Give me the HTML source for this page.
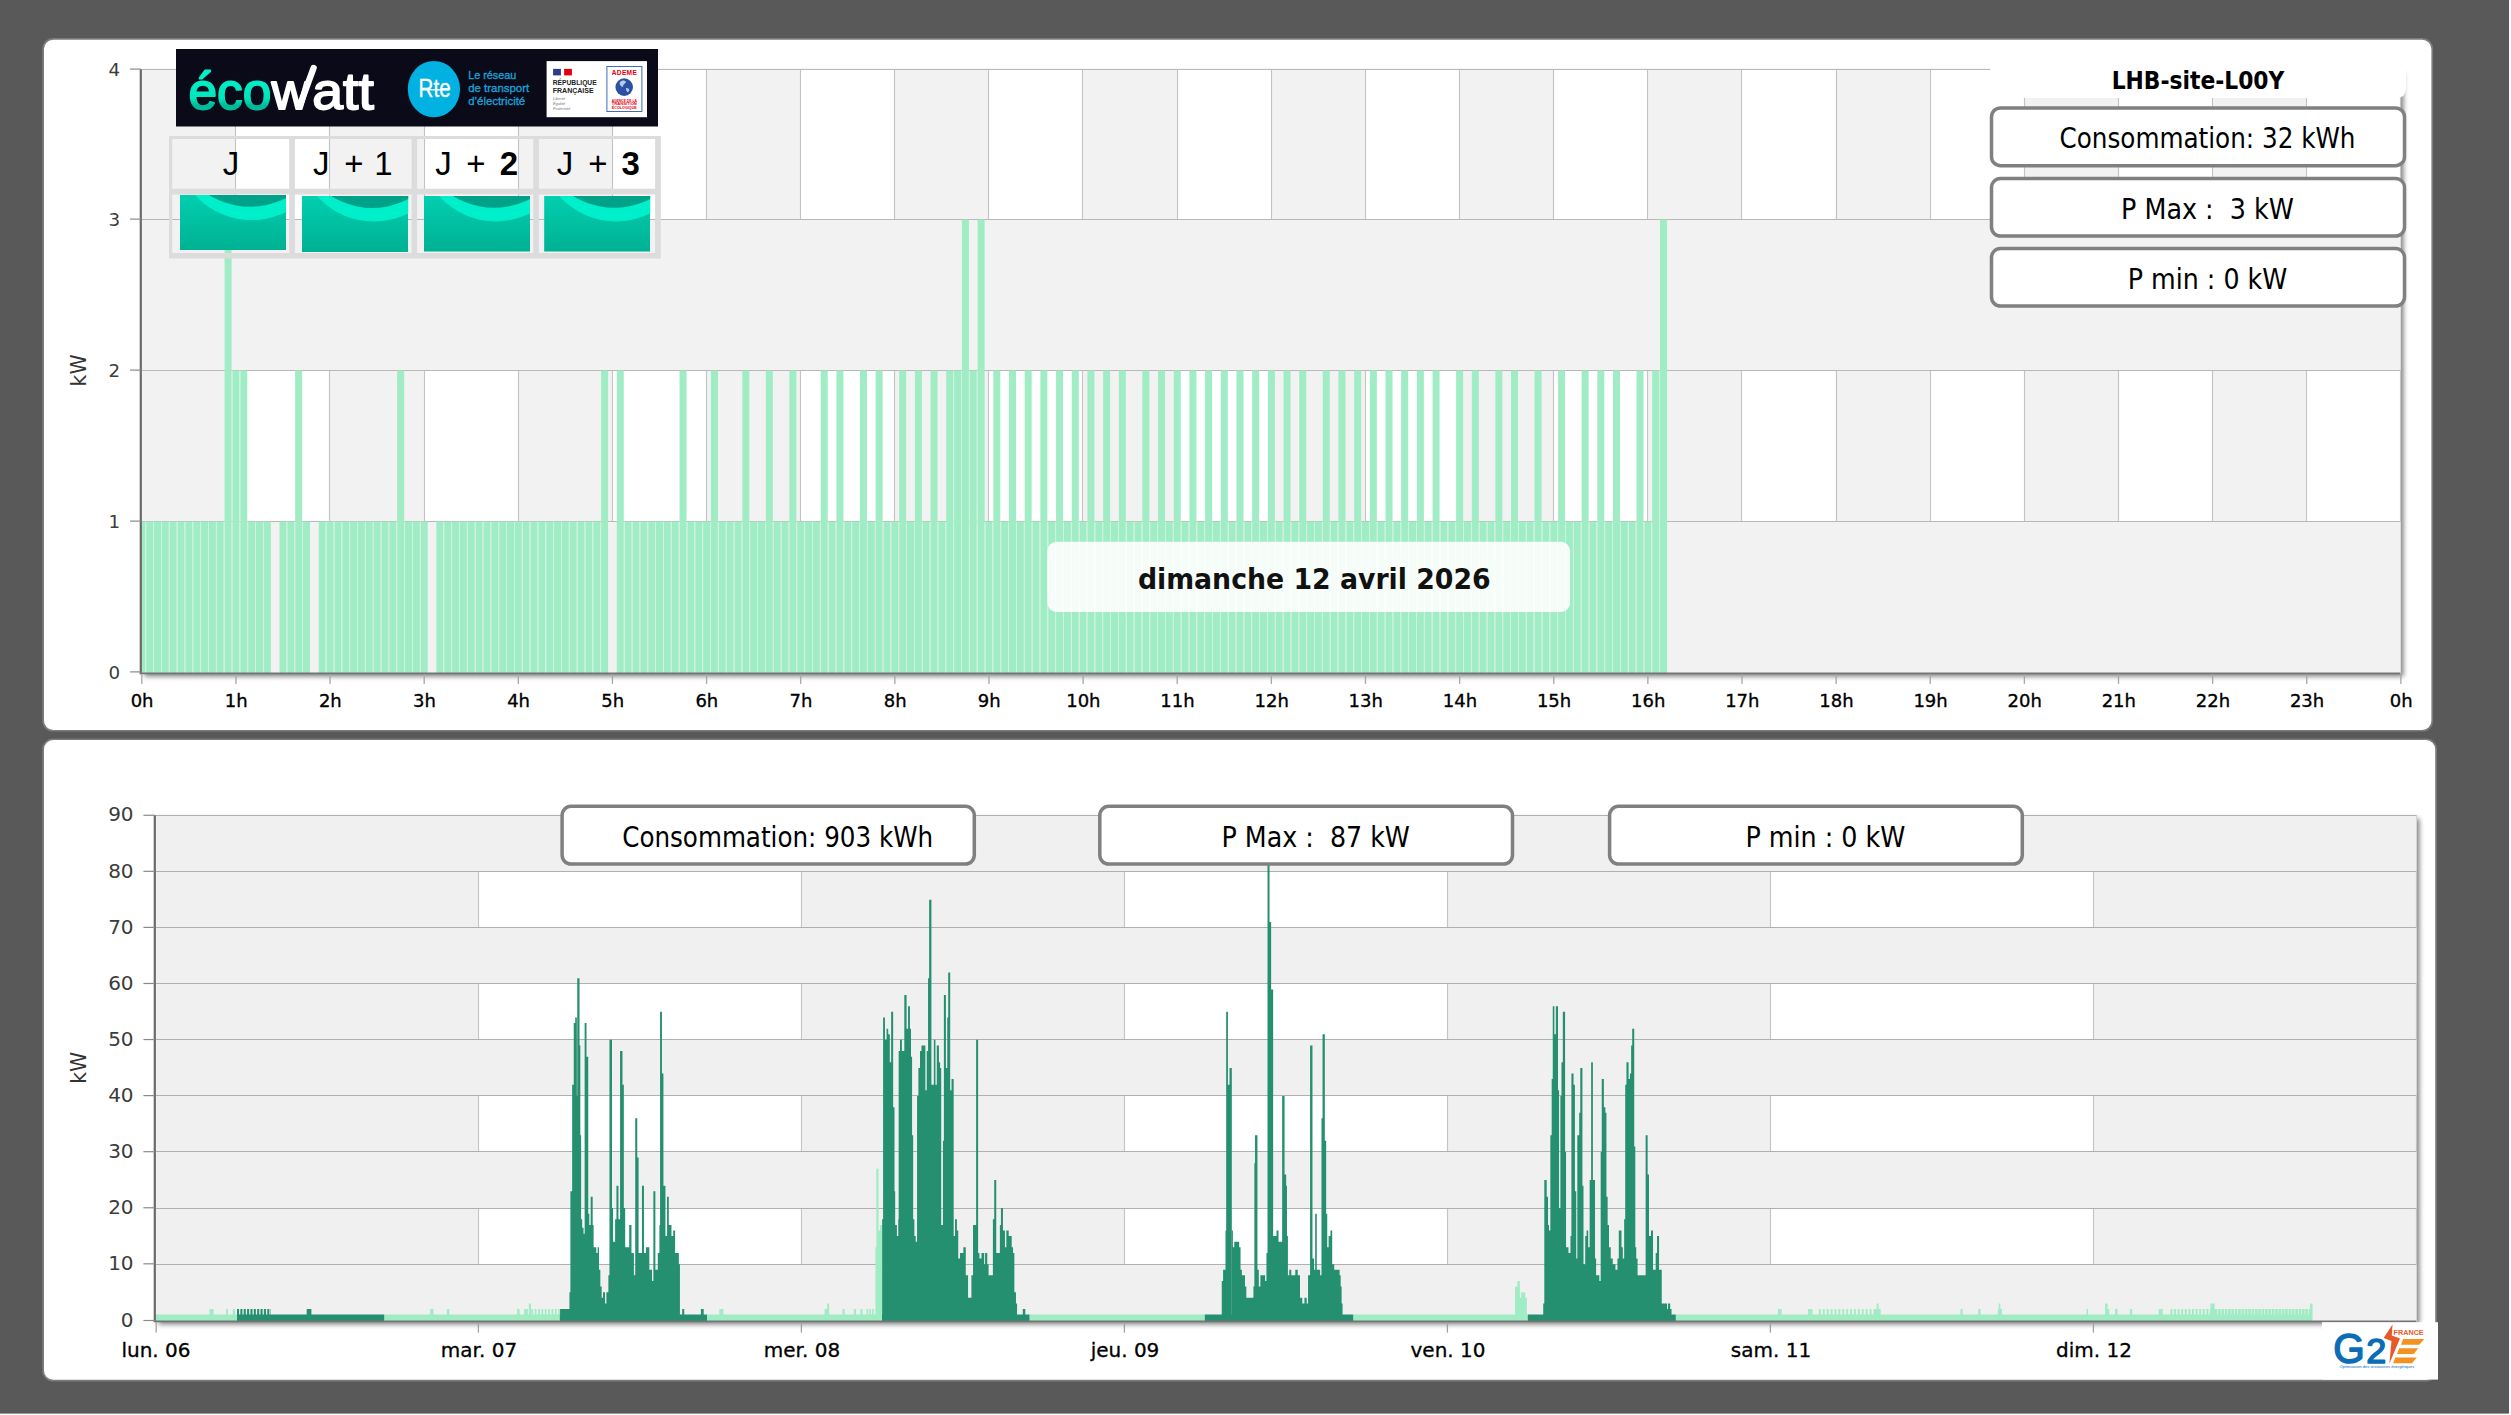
<!DOCTYPE html>
<html lang="fr"><head><meta charset="utf-8"><title>LHB-site-L00Y</title>
<style>html,body{margin:0;padding:0;background:#fff}body{width:2511px;height:1415px;overflow:hidden}svg{display:block}</style>
</head><body>
<svg width="2511" height="1415" viewBox="0 0 2511 1415">
<defs>
<filter id="sh" x="-2%" y="-5%" width="104%" height="110%"><feGaussianBlur in="SourceAlpha" stdDeviation="2.4"/><feOffset dx="3.2" dy="2.8"/><feComponentTransfer><feFuncA type="linear" slope="0.5"/></feComponentTransfer><feMerge><feMergeNode/><feMergeNode in="SourceGraphic"/></feMerge></filter>
<clipPath id="topclip"><rect x="140.8" y="69.5" width="2259.7" height="603.9"/></clipPath>
<linearGradient id="wg" x1="0" y1="0" x2="0" y2="1"><stop offset="0" stop-color="#00cfb0"/><stop offset="1" stop-color="#00b192"/></linearGradient>
<linearGradient id="eg" x1="0" y1="0" x2="0" y2="1"><stop offset="0.25" stop-color="#00f0c8"/><stop offset="0.62" stop-color="#00e6be"/><stop offset="0.75" stop-color="#00b898"/><stop offset="1" stop-color="#00c8a4"/></linearGradient>
</defs>
<rect x="0" y="0" width="2509" height="1413.6" fill="#595959"/>
<rect x="43.15" y="38.95" width="2389.1" height="691.8" rx="10" ry="10" fill="#fff" stroke="#7c7c7c" stroke-width="1.7"/>
<rect x="43.15" y="739.25" width="2392.9" height="641.4" rx="10" ry="10" fill="#fff" stroke="#7c7c7c" stroke-width="1.7"/>
<g id="topchart">
<rect x="141.4" y="69.50" width="2259.1" height="603.90" fill="#fff" filter="url(#sh)"/>
<rect x="141.40" y="69.50" width="94.13" height="603.90" fill="#f2f2f2"/>
<rect x="329.66" y="69.50" width="94.13" height="603.90" fill="#f2f2f2"/>
<rect x="517.92" y="69.50" width="94.13" height="603.90" fill="#f2f2f2"/>
<rect x="706.17" y="69.50" width="94.13" height="603.90" fill="#f2f2f2"/>
<rect x="894.43" y="69.50" width="94.13" height="603.90" fill="#f2f2f2"/>
<rect x="1082.69" y="69.50" width="94.13" height="603.90" fill="#f2f2f2"/>
<rect x="1270.95" y="69.50" width="94.13" height="603.90" fill="#f2f2f2"/>
<rect x="1459.21" y="69.50" width="94.13" height="603.90" fill="#f2f2f2"/>
<rect x="1647.47" y="69.50" width="94.13" height="603.90" fill="#f2f2f2"/>
<rect x="1835.72" y="69.50" width="94.13" height="603.90" fill="#f2f2f2"/>
<rect x="2023.98" y="69.50" width="94.13" height="603.90" fill="#f2f2f2"/>
<rect x="2212.24" y="69.50" width="94.13" height="603.90" fill="#f2f2f2"/>
<line x1="235.50" y1="69.50" x2="235.50" y2="672.0" stroke="#c4c4c4" stroke-width="1.15"/>
<line x1="329.50" y1="69.50" x2="329.50" y2="672.0" stroke="#c4c4c4" stroke-width="1.15"/>
<line x1="424.50" y1="69.50" x2="424.50" y2="672.0" stroke="#c4c4c4" stroke-width="1.15"/>
<line x1="518.50" y1="69.50" x2="518.50" y2="672.0" stroke="#c4c4c4" stroke-width="1.15"/>
<line x1="612.50" y1="69.50" x2="612.50" y2="672.0" stroke="#c4c4c4" stroke-width="1.15"/>
<line x1="706.50" y1="69.50" x2="706.50" y2="672.0" stroke="#c4c4c4" stroke-width="1.15"/>
<line x1="800.50" y1="69.50" x2="800.50" y2="672.0" stroke="#c4c4c4" stroke-width="1.15"/>
<line x1="894.50" y1="69.50" x2="894.50" y2="672.0" stroke="#c4c4c4" stroke-width="1.15"/>
<line x1="988.50" y1="69.50" x2="988.50" y2="672.0" stroke="#c4c4c4" stroke-width="1.15"/>
<line x1="1082.50" y1="69.50" x2="1082.50" y2="672.0" stroke="#c4c4c4" stroke-width="1.15"/>
<line x1="1177.50" y1="69.50" x2="1177.50" y2="672.0" stroke="#c4c4c4" stroke-width="1.15"/>
<line x1="1271.50" y1="69.50" x2="1271.50" y2="672.0" stroke="#c4c4c4" stroke-width="1.15"/>
<line x1="1365.50" y1="69.50" x2="1365.50" y2="672.0" stroke="#c4c4c4" stroke-width="1.15"/>
<line x1="1459.50" y1="69.50" x2="1459.50" y2="672.0" stroke="#c4c4c4" stroke-width="1.15"/>
<line x1="1553.50" y1="69.50" x2="1553.50" y2="672.0" stroke="#c4c4c4" stroke-width="1.15"/>
<line x1="1647.50" y1="69.50" x2="1647.50" y2="672.0" stroke="#c4c4c4" stroke-width="1.15"/>
<line x1="1741.50" y1="69.50" x2="1741.50" y2="672.0" stroke="#c4c4c4" stroke-width="1.15"/>
<line x1="1836.50" y1="69.50" x2="1836.50" y2="672.0" stroke="#c4c4c4" stroke-width="1.15"/>
<line x1="1930.50" y1="69.50" x2="1930.50" y2="672.0" stroke="#c4c4c4" stroke-width="1.15"/>
<line x1="2024.50" y1="69.50" x2="2024.50" y2="672.0" stroke="#c4c4c4" stroke-width="1.15"/>
<line x1="2118.50" y1="69.50" x2="2118.50" y2="672.0" stroke="#c4c4c4" stroke-width="1.15"/>
<line x1="2212.50" y1="69.50" x2="2212.50" y2="672.0" stroke="#c4c4c4" stroke-width="1.15"/>
<line x1="2306.50" y1="69.50" x2="2306.50" y2="672.0" stroke="#c4c4c4" stroke-width="1.15"/>
<line x1="2400.50" y1="69.50" x2="2400.50" y2="672.0" stroke="#c4c4c4" stroke-width="1.15"/>
<rect x="141.4" y="219.50" width="2259.1" height="151.00" fill="#f2f2f2"/>
<rect x="141.4" y="521.50" width="2259.1" height="151.90" fill="#f2f2f2"/>
<line x1="141.4" y1="521.50" x2="2400.5" y2="521.50" stroke="#b8b8b8" stroke-width="1.15"/>
<line x1="141.4" y1="370.50" x2="2400.5" y2="370.50" stroke="#b8b8b8" stroke-width="1.15"/>
<line x1="141.4" y1="219.50" x2="2400.5" y2="219.50" stroke="#b8b8b8" stroke-width="1.15"/>
<line x1="141.4" y1="69.50" x2="2400.5" y2="69.50" stroke="#b8b8b8" stroke-width="1.15"/>
<g clip-path="url(#topclip)">
<rect x="138.30" y="521.50" width="7.0" height="151.90" fill="#a0ecc4"/>
<rect x="146.14" y="521.50" width="7.0" height="151.90" fill="#a0ecc4"/>
<rect x="153.99" y="521.50" width="7.0" height="151.90" fill="#a0ecc4"/>
<rect x="161.83" y="521.50" width="7.0" height="151.90" fill="#a0ecc4"/>
<rect x="169.68" y="521.50" width="7.0" height="151.90" fill="#a0ecc4"/>
<rect x="177.52" y="521.50" width="7.0" height="151.90" fill="#a0ecc4"/>
<rect x="185.36" y="521.50" width="7.0" height="151.90" fill="#a0ecc4"/>
<rect x="193.21" y="521.50" width="7.0" height="151.90" fill="#a0ecc4"/>
<rect x="201.05" y="521.50" width="7.0" height="151.90" fill="#a0ecc4"/>
<rect x="208.90" y="521.50" width="7.0" height="151.90" fill="#a0ecc4"/>
<rect x="216.74" y="521.50" width="7.0" height="151.90" fill="#a0ecc4"/>
<rect x="224.59" y="219.50" width="7.0" height="453.90" fill="#a0ecc4"/>
<rect x="232.43" y="370.50" width="7.0" height="302.90" fill="#a0ecc4"/>
<rect x="240.27" y="370.50" width="7.0" height="302.90" fill="#a0ecc4"/>
<rect x="248.12" y="521.50" width="7.0" height="151.90" fill="#a0ecc4"/>
<rect x="255.96" y="521.50" width="7.0" height="151.90" fill="#a0ecc4"/>
<rect x="263.81" y="521.50" width="7.0" height="151.90" fill="#a0ecc4"/>
<rect x="279.49" y="521.50" width="7.0" height="151.90" fill="#a0ecc4"/>
<rect x="287.34" y="521.50" width="7.0" height="151.90" fill="#a0ecc4"/>
<rect x="295.18" y="370.50" width="7.0" height="302.90" fill="#a0ecc4"/>
<rect x="303.03" y="521.50" width="7.0" height="151.90" fill="#a0ecc4"/>
<rect x="318.71" y="521.50" width="7.0" height="151.90" fill="#a0ecc4"/>
<rect x="326.56" y="521.50" width="7.0" height="151.90" fill="#a0ecc4"/>
<rect x="334.40" y="521.50" width="7.0" height="151.90" fill="#a0ecc4"/>
<rect x="342.25" y="521.50" width="7.0" height="151.90" fill="#a0ecc4"/>
<rect x="350.09" y="521.50" width="7.0" height="151.90" fill="#a0ecc4"/>
<rect x="357.93" y="521.50" width="7.0" height="151.90" fill="#a0ecc4"/>
<rect x="365.78" y="521.50" width="7.0" height="151.90" fill="#a0ecc4"/>
<rect x="373.62" y="521.50" width="7.0" height="151.90" fill="#a0ecc4"/>
<rect x="381.47" y="521.50" width="7.0" height="151.90" fill="#a0ecc4"/>
<rect x="389.31" y="521.50" width="7.0" height="151.90" fill="#a0ecc4"/>
<rect x="397.16" y="370.50" width="7.0" height="302.90" fill="#a0ecc4"/>
<rect x="405.00" y="521.50" width="7.0" height="151.90" fill="#a0ecc4"/>
<rect x="412.84" y="521.50" width="7.0" height="151.90" fill="#a0ecc4"/>
<rect x="420.69" y="521.50" width="7.0" height="151.90" fill="#a0ecc4"/>
<rect x="436.38" y="521.50" width="7.0" height="151.90" fill="#a0ecc4"/>
<rect x="444.22" y="521.50" width="7.0" height="151.90" fill="#a0ecc4"/>
<rect x="452.06" y="521.50" width="7.0" height="151.90" fill="#a0ecc4"/>
<rect x="459.91" y="521.50" width="7.0" height="151.90" fill="#a0ecc4"/>
<rect x="467.75" y="521.50" width="7.0" height="151.90" fill="#a0ecc4"/>
<rect x="475.60" y="521.50" width="7.0" height="151.90" fill="#a0ecc4"/>
<rect x="483.44" y="521.50" width="7.0" height="151.90" fill="#a0ecc4"/>
<rect x="491.28" y="521.50" width="7.0" height="151.90" fill="#a0ecc4"/>
<rect x="499.13" y="521.50" width="7.0" height="151.90" fill="#a0ecc4"/>
<rect x="506.97" y="521.50" width="7.0" height="151.90" fill="#a0ecc4"/>
<rect x="514.82" y="521.50" width="7.0" height="151.90" fill="#a0ecc4"/>
<rect x="522.66" y="521.50" width="7.0" height="151.90" fill="#a0ecc4"/>
<rect x="530.50" y="521.50" width="7.0" height="151.90" fill="#a0ecc4"/>
<rect x="538.35" y="521.50" width="7.0" height="151.90" fill="#a0ecc4"/>
<rect x="546.19" y="521.50" width="7.0" height="151.90" fill="#a0ecc4"/>
<rect x="554.04" y="521.50" width="7.0" height="151.90" fill="#a0ecc4"/>
<rect x="561.88" y="521.50" width="7.0" height="151.90" fill="#a0ecc4"/>
<rect x="569.73" y="521.50" width="7.0" height="151.90" fill="#a0ecc4"/>
<rect x="577.57" y="521.50" width="7.0" height="151.90" fill="#a0ecc4"/>
<rect x="585.41" y="521.50" width="7.0" height="151.90" fill="#a0ecc4"/>
<rect x="593.26" y="521.50" width="7.0" height="151.90" fill="#a0ecc4"/>
<rect x="601.10" y="370.50" width="7.0" height="302.90" fill="#a0ecc4"/>
<rect x="616.79" y="370.50" width="7.0" height="302.90" fill="#a0ecc4"/>
<rect x="624.63" y="521.50" width="7.0" height="151.90" fill="#a0ecc4"/>
<rect x="632.48" y="521.50" width="7.0" height="151.90" fill="#a0ecc4"/>
<rect x="640.32" y="521.50" width="7.0" height="151.90" fill="#a0ecc4"/>
<rect x="648.17" y="521.50" width="7.0" height="151.90" fill="#a0ecc4"/>
<rect x="656.01" y="521.50" width="7.0" height="151.90" fill="#a0ecc4"/>
<rect x="663.85" y="521.50" width="7.0" height="151.90" fill="#a0ecc4"/>
<rect x="671.70" y="521.50" width="7.0" height="151.90" fill="#a0ecc4"/>
<rect x="679.54" y="370.50" width="7.0" height="302.90" fill="#a0ecc4"/>
<rect x="687.39" y="521.50" width="7.0" height="151.90" fill="#a0ecc4"/>
<rect x="695.23" y="521.50" width="7.0" height="151.90" fill="#a0ecc4"/>
<rect x="703.08" y="521.50" width="7.0" height="151.90" fill="#a0ecc4"/>
<rect x="710.92" y="370.50" width="7.0" height="302.90" fill="#a0ecc4"/>
<rect x="718.76" y="521.50" width="7.0" height="151.90" fill="#a0ecc4"/>
<rect x="726.61" y="521.50" width="7.0" height="151.90" fill="#a0ecc4"/>
<rect x="734.45" y="521.50" width="7.0" height="151.90" fill="#a0ecc4"/>
<rect x="742.30" y="370.50" width="7.0" height="302.90" fill="#a0ecc4"/>
<rect x="750.14" y="521.50" width="7.0" height="151.90" fill="#a0ecc4"/>
<rect x="757.98" y="521.50" width="7.0" height="151.90" fill="#a0ecc4"/>
<rect x="765.83" y="370.50" width="7.0" height="302.90" fill="#a0ecc4"/>
<rect x="773.67" y="521.50" width="7.0" height="151.90" fill="#a0ecc4"/>
<rect x="781.52" y="521.50" width="7.0" height="151.90" fill="#a0ecc4"/>
<rect x="789.36" y="370.50" width="7.0" height="302.90" fill="#a0ecc4"/>
<rect x="797.20" y="521.50" width="7.0" height="151.90" fill="#a0ecc4"/>
<rect x="805.05" y="521.50" width="7.0" height="151.90" fill="#a0ecc4"/>
<rect x="812.89" y="521.50" width="7.0" height="151.90" fill="#a0ecc4"/>
<rect x="820.74" y="370.50" width="7.0" height="302.90" fill="#a0ecc4"/>
<rect x="828.58" y="521.50" width="7.0" height="151.90" fill="#a0ecc4"/>
<rect x="836.42" y="370.50" width="7.0" height="302.90" fill="#a0ecc4"/>
<rect x="844.27" y="521.50" width="7.0" height="151.90" fill="#a0ecc4"/>
<rect x="852.11" y="521.50" width="7.0" height="151.90" fill="#a0ecc4"/>
<rect x="859.96" y="370.50" width="7.0" height="302.90" fill="#a0ecc4"/>
<rect x="867.80" y="521.50" width="7.0" height="151.90" fill="#a0ecc4"/>
<rect x="875.65" y="370.50" width="7.0" height="302.90" fill="#a0ecc4"/>
<rect x="883.49" y="521.50" width="7.0" height="151.90" fill="#a0ecc4"/>
<rect x="891.33" y="521.50" width="7.0" height="151.90" fill="#a0ecc4"/>
<rect x="899.18" y="370.50" width="7.0" height="302.90" fill="#a0ecc4"/>
<rect x="907.02" y="521.50" width="7.0" height="151.90" fill="#a0ecc4"/>
<rect x="914.87" y="370.50" width="7.0" height="302.90" fill="#a0ecc4"/>
<rect x="922.71" y="521.50" width="7.0" height="151.90" fill="#a0ecc4"/>
<rect x="930.55" y="370.50" width="7.0" height="302.90" fill="#a0ecc4"/>
<rect x="938.40" y="521.50" width="7.0" height="151.90" fill="#a0ecc4"/>
<rect x="946.24" y="370.50" width="7.0" height="302.90" fill="#a0ecc4"/>
<rect x="954.09" y="370.50" width="7.0" height="302.90" fill="#a0ecc4"/>
<rect x="961.93" y="219.50" width="7.0" height="453.90" fill="#a0ecc4"/>
<rect x="969.77" y="370.50" width="7.0" height="302.90" fill="#a0ecc4"/>
<rect x="977.62" y="219.50" width="7.0" height="453.90" fill="#a0ecc4"/>
<rect x="985.46" y="521.50" width="7.0" height="151.90" fill="#a0ecc4"/>
<rect x="993.31" y="370.50" width="7.0" height="302.90" fill="#a0ecc4"/>
<rect x="1001.15" y="521.50" width="7.0" height="151.90" fill="#a0ecc4"/>
<rect x="1008.99" y="370.50" width="7.0" height="302.90" fill="#a0ecc4"/>
<rect x="1016.84" y="521.50" width="7.0" height="151.90" fill="#a0ecc4"/>
<rect x="1024.68" y="370.50" width="7.0" height="302.90" fill="#a0ecc4"/>
<rect x="1032.53" y="521.50" width="7.0" height="151.90" fill="#a0ecc4"/>
<rect x="1040.37" y="370.50" width="7.0" height="302.90" fill="#a0ecc4"/>
<rect x="1048.22" y="521.50" width="7.0" height="151.90" fill="#a0ecc4"/>
<rect x="1056.06" y="370.50" width="7.0" height="302.90" fill="#a0ecc4"/>
<rect x="1063.90" y="521.50" width="7.0" height="151.90" fill="#a0ecc4"/>
<rect x="1071.75" y="370.50" width="7.0" height="302.90" fill="#a0ecc4"/>
<rect x="1079.59" y="521.50" width="7.0" height="151.90" fill="#a0ecc4"/>
<rect x="1087.44" y="370.50" width="7.0" height="302.90" fill="#a0ecc4"/>
<rect x="1095.28" y="521.50" width="7.0" height="151.90" fill="#a0ecc4"/>
<rect x="1103.12" y="370.50" width="7.0" height="302.90" fill="#a0ecc4"/>
<rect x="1110.97" y="521.50" width="7.0" height="151.90" fill="#a0ecc4"/>
<rect x="1118.81" y="370.50" width="7.0" height="302.90" fill="#a0ecc4"/>
<rect x="1126.66" y="521.50" width="7.0" height="151.90" fill="#a0ecc4"/>
<rect x="1134.50" y="521.50" width="7.0" height="151.90" fill="#a0ecc4"/>
<rect x="1142.34" y="370.50" width="7.0" height="302.90" fill="#a0ecc4"/>
<rect x="1150.19" y="521.50" width="7.0" height="151.90" fill="#a0ecc4"/>
<rect x="1158.03" y="370.50" width="7.0" height="302.90" fill="#a0ecc4"/>
<rect x="1165.88" y="521.50" width="7.0" height="151.90" fill="#a0ecc4"/>
<rect x="1173.72" y="370.50" width="7.0" height="302.90" fill="#a0ecc4"/>
<rect x="1181.56" y="521.50" width="7.0" height="151.90" fill="#a0ecc4"/>
<rect x="1189.41" y="370.50" width="7.0" height="302.90" fill="#a0ecc4"/>
<rect x="1197.25" y="521.50" width="7.0" height="151.90" fill="#a0ecc4"/>
<rect x="1205.10" y="370.50" width="7.0" height="302.90" fill="#a0ecc4"/>
<rect x="1212.94" y="521.50" width="7.0" height="151.90" fill="#a0ecc4"/>
<rect x="1220.79" y="370.50" width="7.0" height="302.90" fill="#a0ecc4"/>
<rect x="1228.63" y="521.50" width="7.0" height="151.90" fill="#a0ecc4"/>
<rect x="1236.47" y="370.50" width="7.0" height="302.90" fill="#a0ecc4"/>
<rect x="1244.32" y="521.50" width="7.0" height="151.90" fill="#a0ecc4"/>
<rect x="1252.16" y="370.50" width="7.0" height="302.90" fill="#a0ecc4"/>
<rect x="1260.01" y="521.50" width="7.0" height="151.90" fill="#a0ecc4"/>
<rect x="1267.85" y="370.50" width="7.0" height="302.90" fill="#a0ecc4"/>
<rect x="1275.69" y="521.50" width="7.0" height="151.90" fill="#a0ecc4"/>
<rect x="1283.54" y="370.50" width="7.0" height="302.90" fill="#a0ecc4"/>
<rect x="1291.38" y="521.50" width="7.0" height="151.90" fill="#a0ecc4"/>
<rect x="1299.23" y="370.50" width="7.0" height="302.90" fill="#a0ecc4"/>
<rect x="1307.07" y="521.50" width="7.0" height="151.90" fill="#a0ecc4"/>
<rect x="1314.91" y="521.50" width="7.0" height="151.90" fill="#a0ecc4"/>
<rect x="1322.76" y="370.50" width="7.0" height="302.90" fill="#a0ecc4"/>
<rect x="1330.60" y="521.50" width="7.0" height="151.90" fill="#a0ecc4"/>
<rect x="1338.45" y="370.50" width="7.0" height="302.90" fill="#a0ecc4"/>
<rect x="1346.29" y="521.50" width="7.0" height="151.90" fill="#a0ecc4"/>
<rect x="1354.14" y="370.50" width="7.0" height="302.90" fill="#a0ecc4"/>
<rect x="1361.98" y="521.50" width="7.0" height="151.90" fill="#a0ecc4"/>
<rect x="1369.82" y="370.50" width="7.0" height="302.90" fill="#a0ecc4"/>
<rect x="1377.67" y="521.50" width="7.0" height="151.90" fill="#a0ecc4"/>
<rect x="1385.51" y="370.50" width="7.0" height="302.90" fill="#a0ecc4"/>
<rect x="1393.36" y="521.50" width="7.0" height="151.90" fill="#a0ecc4"/>
<rect x="1401.20" y="370.50" width="7.0" height="302.90" fill="#a0ecc4"/>
<rect x="1409.04" y="521.50" width="7.0" height="151.90" fill="#a0ecc4"/>
<rect x="1416.89" y="370.50" width="7.0" height="302.90" fill="#a0ecc4"/>
<rect x="1424.73" y="521.50" width="7.0" height="151.90" fill="#a0ecc4"/>
<rect x="1432.58" y="370.50" width="7.0" height="302.90" fill="#a0ecc4"/>
<rect x="1440.42" y="521.50" width="7.0" height="151.90" fill="#a0ecc4"/>
<rect x="1448.26" y="521.50" width="7.0" height="151.90" fill="#a0ecc4"/>
<rect x="1456.11" y="370.50" width="7.0" height="302.90" fill="#a0ecc4"/>
<rect x="1463.95" y="521.50" width="7.0" height="151.90" fill="#a0ecc4"/>
<rect x="1471.80" y="370.50" width="7.0" height="302.90" fill="#a0ecc4"/>
<rect x="1479.64" y="521.50" width="7.0" height="151.90" fill="#a0ecc4"/>
<rect x="1487.48" y="521.50" width="7.0" height="151.90" fill="#a0ecc4"/>
<rect x="1495.33" y="370.50" width="7.0" height="302.90" fill="#a0ecc4"/>
<rect x="1503.17" y="521.50" width="7.0" height="151.90" fill="#a0ecc4"/>
<rect x="1511.02" y="370.50" width="7.0" height="302.90" fill="#a0ecc4"/>
<rect x="1518.86" y="521.50" width="7.0" height="151.90" fill="#a0ecc4"/>
<rect x="1526.71" y="521.50" width="7.0" height="151.90" fill="#a0ecc4"/>
<rect x="1534.55" y="370.50" width="7.0" height="302.90" fill="#a0ecc4"/>
<rect x="1542.39" y="521.50" width="7.0" height="151.90" fill="#a0ecc4"/>
<rect x="1550.24" y="521.50" width="7.0" height="151.90" fill="#a0ecc4"/>
<rect x="1558.08" y="370.50" width="7.0" height="302.90" fill="#a0ecc4"/>
<rect x="1565.93" y="521.50" width="7.0" height="151.90" fill="#a0ecc4"/>
<rect x="1573.77" y="521.50" width="7.0" height="151.90" fill="#a0ecc4"/>
<rect x="1581.61" y="370.50" width="7.0" height="302.90" fill="#a0ecc4"/>
<rect x="1589.46" y="521.50" width="7.0" height="151.90" fill="#a0ecc4"/>
<rect x="1597.30" y="370.50" width="7.0" height="302.90" fill="#a0ecc4"/>
<rect x="1605.15" y="521.50" width="7.0" height="151.90" fill="#a0ecc4"/>
<rect x="1612.99" y="370.50" width="7.0" height="302.90" fill="#a0ecc4"/>
<rect x="1620.83" y="521.50" width="7.0" height="151.90" fill="#a0ecc4"/>
<rect x="1628.68" y="521.50" width="7.0" height="151.90" fill="#a0ecc4"/>
<rect x="1636.52" y="370.50" width="7.0" height="302.90" fill="#a0ecc4"/>
<rect x="1644.37" y="521.50" width="7.0" height="151.90" fill="#a0ecc4"/>
<rect x="1652.21" y="370.50" width="7.0" height="302.90" fill="#a0ecc4"/>
<rect x="1660.05" y="219.50" width="7.0" height="453.90" fill="#a0ecc4"/>
<path d="M145.30 521.50h0.844V673.4h-0.844ZM153.14 521.50h0.844V673.4h-0.844ZM160.99 521.50h0.844V673.4h-0.844ZM168.83 521.50h0.844V673.4h-0.844ZM176.68 521.50h0.844V673.4h-0.844ZM184.52 521.50h0.844V673.4h-0.844ZM192.36 521.50h0.844V673.4h-0.844ZM200.21 521.50h0.844V673.4h-0.844ZM208.05 521.50h0.844V673.4h-0.844ZM215.90 521.50h0.844V673.4h-0.844ZM223.74 521.50h0.844V673.4h-0.844ZM231.59 370.50h0.844V673.4h-0.844ZM239.43 370.50h0.844V673.4h-0.844ZM247.27 521.50h0.844V673.4h-0.844ZM255.12 521.50h0.844V673.4h-0.844ZM262.96 521.50h0.844V673.4h-0.844ZM286.49 521.50h0.844V673.4h-0.844ZM294.34 521.50h0.844V673.4h-0.844ZM302.18 521.50h0.844V673.4h-0.844ZM325.71 521.50h0.844V673.4h-0.844ZM333.56 521.50h0.844V673.4h-0.844ZM341.40 521.50h0.844V673.4h-0.844ZM349.25 521.50h0.844V673.4h-0.844ZM357.09 521.50h0.844V673.4h-0.844ZM364.93 521.50h0.844V673.4h-0.844ZM372.78 521.50h0.844V673.4h-0.844ZM380.62 521.50h0.844V673.4h-0.844ZM388.47 521.50h0.844V673.4h-0.844ZM396.31 521.50h0.844V673.4h-0.844ZM404.16 521.50h0.844V673.4h-0.844ZM412.00 521.50h0.844V673.4h-0.844ZM419.84 521.50h0.844V673.4h-0.844ZM443.38 521.50h0.844V673.4h-0.844ZM451.22 521.50h0.844V673.4h-0.844ZM459.06 521.50h0.844V673.4h-0.844ZM466.91 521.50h0.844V673.4h-0.844ZM474.75 521.50h0.844V673.4h-0.844ZM482.60 521.50h0.844V673.4h-0.844ZM490.44 521.50h0.844V673.4h-0.844ZM498.28 521.50h0.844V673.4h-0.844ZM506.13 521.50h0.844V673.4h-0.844ZM513.97 521.50h0.844V673.4h-0.844ZM521.82 521.50h0.844V673.4h-0.844ZM529.66 521.50h0.844V673.4h-0.844ZM537.50 521.50h0.844V673.4h-0.844ZM545.35 521.50h0.844V673.4h-0.844ZM553.19 521.50h0.844V673.4h-0.844ZM561.04 521.50h0.844V673.4h-0.844ZM568.88 521.50h0.844V673.4h-0.844ZM576.73 521.50h0.844V673.4h-0.844ZM584.57 521.50h0.844V673.4h-0.844ZM592.41 521.50h0.844V673.4h-0.844ZM600.26 521.50h0.844V673.4h-0.844ZM623.79 521.50h0.844V673.4h-0.844ZM631.63 521.50h0.844V673.4h-0.844ZM639.48 521.50h0.844V673.4h-0.844ZM647.32 521.50h0.844V673.4h-0.844ZM655.17 521.50h0.844V673.4h-0.844ZM663.01 521.50h0.844V673.4h-0.844ZM670.85 521.50h0.844V673.4h-0.844ZM678.70 521.50h0.844V673.4h-0.844ZM686.54 521.50h0.844V673.4h-0.844ZM694.39 521.50h0.844V673.4h-0.844ZM702.23 521.50h0.844V673.4h-0.844ZM710.08 521.50h0.844V673.4h-0.844ZM717.92 521.50h0.844V673.4h-0.844ZM725.76 521.50h0.844V673.4h-0.844ZM733.61 521.50h0.844V673.4h-0.844ZM741.45 521.50h0.844V673.4h-0.844ZM749.30 521.50h0.844V673.4h-0.844ZM757.14 521.50h0.844V673.4h-0.844ZM764.98 521.50h0.844V673.4h-0.844ZM772.83 521.50h0.844V673.4h-0.844ZM780.67 521.50h0.844V673.4h-0.844ZM788.52 521.50h0.844V673.4h-0.844ZM796.36 521.50h0.844V673.4h-0.844ZM804.20 521.50h0.844V673.4h-0.844ZM812.05 521.50h0.844V673.4h-0.844ZM819.89 521.50h0.844V673.4h-0.844ZM827.74 521.50h0.844V673.4h-0.844ZM835.58 521.50h0.844V673.4h-0.844ZM843.42 521.50h0.844V673.4h-0.844ZM851.27 521.50h0.844V673.4h-0.844ZM859.11 521.50h0.844V673.4h-0.844ZM866.96 521.50h0.844V673.4h-0.844ZM874.80 521.50h0.844V673.4h-0.844ZM882.65 521.50h0.844V673.4h-0.844ZM890.49 521.50h0.844V673.4h-0.844ZM898.33 521.50h0.844V673.4h-0.844ZM906.18 521.50h0.844V673.4h-0.844ZM914.02 521.50h0.844V673.4h-0.844ZM921.87 521.50h0.844V673.4h-0.844ZM929.71 521.50h0.844V673.4h-0.844ZM937.55 521.50h0.844V673.4h-0.844ZM945.40 521.50h0.844V673.4h-0.844ZM953.24 370.50h0.844V673.4h-0.844ZM961.09 370.50h0.844V673.4h-0.844ZM968.93 370.50h0.844V673.4h-0.844ZM976.77 370.50h0.844V673.4h-0.844ZM984.62 521.50h0.844V673.4h-0.844ZM992.46 521.50h0.844V673.4h-0.844ZM1000.31 521.50h0.844V673.4h-0.844ZM1008.15 521.50h0.844V673.4h-0.844ZM1015.99 521.50h0.844V673.4h-0.844ZM1023.84 521.50h0.844V673.4h-0.844ZM1031.68 521.50h0.844V673.4h-0.844ZM1039.53 521.50h0.844V673.4h-0.844ZM1047.37 521.50h0.844V673.4h-0.844ZM1055.22 521.50h0.844V673.4h-0.844ZM1063.06 521.50h0.844V673.4h-0.844ZM1070.90 521.50h0.844V673.4h-0.844ZM1078.75 521.50h0.844V673.4h-0.844ZM1086.59 521.50h0.844V673.4h-0.844ZM1094.44 521.50h0.844V673.4h-0.844ZM1102.28 521.50h0.844V673.4h-0.844ZM1110.12 521.50h0.844V673.4h-0.844ZM1117.97 521.50h0.844V673.4h-0.844ZM1125.81 521.50h0.844V673.4h-0.844ZM1133.66 521.50h0.844V673.4h-0.844ZM1141.50 521.50h0.844V673.4h-0.844ZM1149.34 521.50h0.844V673.4h-0.844ZM1157.19 521.50h0.844V673.4h-0.844ZM1165.03 521.50h0.844V673.4h-0.844ZM1172.88 521.50h0.844V673.4h-0.844ZM1180.72 521.50h0.844V673.4h-0.844ZM1188.56 521.50h0.844V673.4h-0.844ZM1196.41 521.50h0.844V673.4h-0.844ZM1204.25 521.50h0.844V673.4h-0.844ZM1212.10 521.50h0.844V673.4h-0.844ZM1219.94 521.50h0.844V673.4h-0.844ZM1227.79 521.50h0.844V673.4h-0.844ZM1235.63 521.50h0.844V673.4h-0.844ZM1243.47 521.50h0.844V673.4h-0.844ZM1251.32 521.50h0.844V673.4h-0.844ZM1259.16 521.50h0.844V673.4h-0.844ZM1267.01 521.50h0.844V673.4h-0.844ZM1274.85 521.50h0.844V673.4h-0.844ZM1282.69 521.50h0.844V673.4h-0.844ZM1290.54 521.50h0.844V673.4h-0.844ZM1298.38 521.50h0.844V673.4h-0.844ZM1306.23 521.50h0.844V673.4h-0.844ZM1314.07 521.50h0.844V673.4h-0.844ZM1321.91 521.50h0.844V673.4h-0.844ZM1329.76 521.50h0.844V673.4h-0.844ZM1337.60 521.50h0.844V673.4h-0.844ZM1345.45 521.50h0.844V673.4h-0.844ZM1353.29 521.50h0.844V673.4h-0.844ZM1361.14 521.50h0.844V673.4h-0.844ZM1368.98 521.50h0.844V673.4h-0.844ZM1376.82 521.50h0.844V673.4h-0.844ZM1384.67 521.50h0.844V673.4h-0.844ZM1392.51 521.50h0.844V673.4h-0.844ZM1400.36 521.50h0.844V673.4h-0.844ZM1408.20 521.50h0.844V673.4h-0.844ZM1416.04 521.50h0.844V673.4h-0.844ZM1423.89 521.50h0.844V673.4h-0.844ZM1431.73 521.50h0.844V673.4h-0.844ZM1439.58 521.50h0.844V673.4h-0.844ZM1447.42 521.50h0.844V673.4h-0.844ZM1455.26 521.50h0.844V673.4h-0.844ZM1463.11 521.50h0.844V673.4h-0.844ZM1470.95 521.50h0.844V673.4h-0.844ZM1478.80 521.50h0.844V673.4h-0.844ZM1486.64 521.50h0.844V673.4h-0.844ZM1494.48 521.50h0.844V673.4h-0.844ZM1502.33 521.50h0.844V673.4h-0.844ZM1510.17 521.50h0.844V673.4h-0.844ZM1518.02 521.50h0.844V673.4h-0.844ZM1525.86 521.50h0.844V673.4h-0.844ZM1533.71 521.50h0.844V673.4h-0.844ZM1541.55 521.50h0.844V673.4h-0.844ZM1549.39 521.50h0.844V673.4h-0.844ZM1557.24 521.50h0.844V673.4h-0.844ZM1565.08 521.50h0.844V673.4h-0.844ZM1572.93 521.50h0.844V673.4h-0.844ZM1580.77 521.50h0.844V673.4h-0.844ZM1588.61 521.50h0.844V673.4h-0.844ZM1596.46 521.50h0.844V673.4h-0.844ZM1604.30 521.50h0.844V673.4h-0.844ZM1612.15 521.50h0.844V673.4h-0.844ZM1619.99 521.50h0.844V673.4h-0.844ZM1627.83 521.50h0.844V673.4h-0.844ZM1635.68 521.50h0.844V673.4h-0.844ZM1643.52 521.50h0.844V673.4h-0.844ZM1651.37 521.50h0.844V673.4h-0.844ZM1659.21 370.50h0.844V673.4h-0.844Z" fill="#c6f3dc"/>
</g>
<line x1="140.8" y1="69.20" x2="140.8" y2="674.1999999999999" stroke="#6a6a6a" stroke-width="2.2"/>
<line x1="139.8" y1="673.4" x2="2400.5" y2="673.4" stroke="#757575" stroke-width="1.7"/>
<line x1="130.0" y1="671.90" x2="140.8" y2="671.90" stroke="#8a8a8a" stroke-width="1.2"/>
<text x="120.2" y="678.90" font-family='"DejaVu Sans", "Liberation Sans", sans-serif' font-size="18.3" fill="#3c3c3c" text-anchor="end">0</text>
<line x1="130.0" y1="521.10" x2="140.8" y2="521.10" stroke="#8a8a8a" stroke-width="1.2"/>
<text x="120.2" y="528.10" font-family='"DejaVu Sans", "Liberation Sans", sans-serif' font-size="18.3" fill="#3c3c3c" text-anchor="end">1</text>
<line x1="130.0" y1="370.10" x2="140.8" y2="370.10" stroke="#8a8a8a" stroke-width="1.2"/>
<text x="120.2" y="377.10" font-family='"DejaVu Sans", "Liberation Sans", sans-serif' font-size="18.3" fill="#3c3c3c" text-anchor="end">2</text>
<line x1="130.0" y1="219.10" x2="140.8" y2="219.10" stroke="#8a8a8a" stroke-width="1.2"/>
<text x="120.2" y="226.10" font-family='"DejaVu Sans", "Liberation Sans", sans-serif' font-size="18.3" fill="#3c3c3c" text-anchor="end">3</text>
<line x1="130.0" y1="69.10" x2="140.8" y2="69.10" stroke="#8a8a8a" stroke-width="1.2"/>
<text x="120.2" y="76.10" font-family='"DejaVu Sans", "Liberation Sans", sans-serif' font-size="18.3" fill="#3c3c3c" text-anchor="end">4</text>
<line x1="141.80" y1="674.1999999999999" x2="141.80" y2="683.9" stroke="#a6a6a6" stroke-width="1.3"/>
<text x="142.10" y="707" font-family='"DejaVu Sans", "Liberation Sans", sans-serif' font-size="18" fill="#000" stroke="#000" stroke-width="0.35" text-anchor="middle">0h</text>
<line x1="235.93" y1="674.1999999999999" x2="235.93" y2="683.9" stroke="#a6a6a6" stroke-width="1.3"/>
<text x="236.23" y="707" font-family='"DejaVu Sans", "Liberation Sans", sans-serif' font-size="18" fill="#000" stroke="#000" stroke-width="0.35" text-anchor="middle">1h</text>
<line x1="330.06" y1="674.1999999999999" x2="330.06" y2="683.9" stroke="#a6a6a6" stroke-width="1.3"/>
<text x="330.36" y="707" font-family='"DejaVu Sans", "Liberation Sans", sans-serif' font-size="18" fill="#000" stroke="#000" stroke-width="0.35" text-anchor="middle">2h</text>
<line x1="424.19" y1="674.1999999999999" x2="424.19" y2="683.9" stroke="#a6a6a6" stroke-width="1.3"/>
<text x="424.49" y="707" font-family='"DejaVu Sans", "Liberation Sans", sans-serif' font-size="18" fill="#000" stroke="#000" stroke-width="0.35" text-anchor="middle">3h</text>
<line x1="518.32" y1="674.1999999999999" x2="518.32" y2="683.9" stroke="#a6a6a6" stroke-width="1.3"/>
<text x="518.62" y="707" font-family='"DejaVu Sans", "Liberation Sans", sans-serif' font-size="18" fill="#000" stroke="#000" stroke-width="0.35" text-anchor="middle">4h</text>
<line x1="612.45" y1="674.1999999999999" x2="612.45" y2="683.9" stroke="#a6a6a6" stroke-width="1.3"/>
<text x="612.75" y="707" font-family='"DejaVu Sans", "Liberation Sans", sans-serif' font-size="18" fill="#000" stroke="#000" stroke-width="0.35" text-anchor="middle">5h</text>
<line x1="706.57" y1="674.1999999999999" x2="706.57" y2="683.9" stroke="#a6a6a6" stroke-width="1.3"/>
<text x="706.87" y="707" font-family='"DejaVu Sans", "Liberation Sans", sans-serif' font-size="18" fill="#000" stroke="#000" stroke-width="0.35" text-anchor="middle">6h</text>
<line x1="800.70" y1="674.1999999999999" x2="800.70" y2="683.9" stroke="#a6a6a6" stroke-width="1.3"/>
<text x="801.00" y="707" font-family='"DejaVu Sans", "Liberation Sans", sans-serif' font-size="18" fill="#000" stroke="#000" stroke-width="0.35" text-anchor="middle">7h</text>
<line x1="894.83" y1="674.1999999999999" x2="894.83" y2="683.9" stroke="#a6a6a6" stroke-width="1.3"/>
<text x="895.13" y="707" font-family='"DejaVu Sans", "Liberation Sans", sans-serif' font-size="18" fill="#000" stroke="#000" stroke-width="0.35" text-anchor="middle">8h</text>
<line x1="988.96" y1="674.1999999999999" x2="988.96" y2="683.9" stroke="#a6a6a6" stroke-width="1.3"/>
<text x="989.26" y="707" font-family='"DejaVu Sans", "Liberation Sans", sans-serif' font-size="18" fill="#000" stroke="#000" stroke-width="0.35" text-anchor="middle">9h</text>
<line x1="1083.09" y1="674.1999999999999" x2="1083.09" y2="683.9" stroke="#a6a6a6" stroke-width="1.3"/>
<text x="1083.39" y="707" font-family='"DejaVu Sans", "Liberation Sans", sans-serif' font-size="18" fill="#000" stroke="#000" stroke-width="0.35" text-anchor="middle">10h</text>
<line x1="1177.22" y1="674.1999999999999" x2="1177.22" y2="683.9" stroke="#a6a6a6" stroke-width="1.3"/>
<text x="1177.52" y="707" font-family='"DejaVu Sans", "Liberation Sans", sans-serif' font-size="18" fill="#000" stroke="#000" stroke-width="0.35" text-anchor="middle">11h</text>
<line x1="1271.35" y1="674.1999999999999" x2="1271.35" y2="683.9" stroke="#a6a6a6" stroke-width="1.3"/>
<text x="1271.65" y="707" font-family='"DejaVu Sans", "Liberation Sans", sans-serif' font-size="18" fill="#000" stroke="#000" stroke-width="0.35" text-anchor="middle">12h</text>
<line x1="1365.48" y1="674.1999999999999" x2="1365.48" y2="683.9" stroke="#a6a6a6" stroke-width="1.3"/>
<text x="1365.78" y="707" font-family='"DejaVu Sans", "Liberation Sans", sans-serif' font-size="18" fill="#000" stroke="#000" stroke-width="0.35" text-anchor="middle">13h</text>
<line x1="1459.61" y1="674.1999999999999" x2="1459.61" y2="683.9" stroke="#a6a6a6" stroke-width="1.3"/>
<text x="1459.91" y="707" font-family='"DejaVu Sans", "Liberation Sans", sans-serif' font-size="18" fill="#000" stroke="#000" stroke-width="0.35" text-anchor="middle">14h</text>
<line x1="1553.74" y1="674.1999999999999" x2="1553.74" y2="683.9" stroke="#a6a6a6" stroke-width="1.3"/>
<text x="1554.04" y="707" font-family='"DejaVu Sans", "Liberation Sans", sans-serif' font-size="18" fill="#000" stroke="#000" stroke-width="0.35" text-anchor="middle">15h</text>
<line x1="1647.87" y1="674.1999999999999" x2="1647.87" y2="683.9" stroke="#a6a6a6" stroke-width="1.3"/>
<text x="1648.17" y="707" font-family='"DejaVu Sans", "Liberation Sans", sans-serif' font-size="18" fill="#000" stroke="#000" stroke-width="0.35" text-anchor="middle">16h</text>
<line x1="1742.00" y1="674.1999999999999" x2="1742.00" y2="683.9" stroke="#a6a6a6" stroke-width="1.3"/>
<text x="1742.30" y="707" font-family='"DejaVu Sans", "Liberation Sans", sans-serif' font-size="18" fill="#000" stroke="#000" stroke-width="0.35" text-anchor="middle">17h</text>
<line x1="1836.12" y1="674.1999999999999" x2="1836.12" y2="683.9" stroke="#a6a6a6" stroke-width="1.3"/>
<text x="1836.42" y="707" font-family='"DejaVu Sans", "Liberation Sans", sans-serif' font-size="18" fill="#000" stroke="#000" stroke-width="0.35" text-anchor="middle">18h</text>
<line x1="1930.25" y1="674.1999999999999" x2="1930.25" y2="683.9" stroke="#a6a6a6" stroke-width="1.3"/>
<text x="1930.55" y="707" font-family='"DejaVu Sans", "Liberation Sans", sans-serif' font-size="18" fill="#000" stroke="#000" stroke-width="0.35" text-anchor="middle">19h</text>
<line x1="2024.38" y1="674.1999999999999" x2="2024.38" y2="683.9" stroke="#a6a6a6" stroke-width="1.3"/>
<text x="2024.68" y="707" font-family='"DejaVu Sans", "Liberation Sans", sans-serif' font-size="18" fill="#000" stroke="#000" stroke-width="0.35" text-anchor="middle">20h</text>
<line x1="2118.51" y1="674.1999999999999" x2="2118.51" y2="683.9" stroke="#a6a6a6" stroke-width="1.3"/>
<text x="2118.81" y="707" font-family='"DejaVu Sans", "Liberation Sans", sans-serif' font-size="18" fill="#000" stroke="#000" stroke-width="0.35" text-anchor="middle">21h</text>
<line x1="2212.64" y1="674.1999999999999" x2="2212.64" y2="683.9" stroke="#a6a6a6" stroke-width="1.3"/>
<text x="2212.94" y="707" font-family='"DejaVu Sans", "Liberation Sans", sans-serif' font-size="18" fill="#000" stroke="#000" stroke-width="0.35" text-anchor="middle">22h</text>
<line x1="2306.77" y1="674.1999999999999" x2="2306.77" y2="683.9" stroke="#a6a6a6" stroke-width="1.3"/>
<text x="2307.07" y="707" font-family='"DejaVu Sans", "Liberation Sans", sans-serif' font-size="18" fill="#000" stroke="#000" stroke-width="0.35" text-anchor="middle">23h</text>
<line x1="2400.90" y1="674.1999999999999" x2="2400.90" y2="683.9" stroke="#a6a6a6" stroke-width="1.3"/>
<text x="2401.20" y="707" font-family='"DejaVu Sans", "Liberation Sans", sans-serif' font-size="18" fill="#000" stroke="#000" stroke-width="0.35" text-anchor="middle">0h</text>
<text transform="translate(86.1,370.4) rotate(-90) scale(1.02,1.10)" font-family='"DejaVu Sans", "Liberation Sans", sans-serif' font-size="20" fill="#333" text-anchor="middle">kW</text>
</g>
<g id="ecowatt">
<rect x="176" y="49" width="482" height="77.5" fill="#0a0a18"/>
<path d="M299.4 106.5L313.6 68" stroke="#fff" stroke-width="6.4" stroke-linecap="round" fill="none"/>
<text y="109.3" font-family='"Liberation Sans", sans-serif' font-size="52" stroke-width="1.8" stroke-linejoin="round"><tspan x="188.4" fill="url(#eg)" stroke="url(#eg)" textLength="83" lengthAdjust="spacingAndGlyphs">éco</tspan><tspan x="271.5" fill="#fff" stroke="#fff" textLength="38" lengthAdjust="spacingAndGlyphs">w</tspan><tspan x="312.3" fill="#fff" stroke="#fff" textLength="61.5" lengthAdjust="spacingAndGlyphs">att</tspan></text>
<ellipse cx="433.9" cy="89.1" rx="26.1" ry="28.2" fill="#00b1e2"/>
<text x="434.6" y="96.8" font-family='"Liberation Sans", sans-serif' font-size="25" fill="#fff" stroke="#fff" stroke-width="0.3" text-anchor="middle" textLength="32" lengthAdjust="spacingAndGlyphs">Rte</text>
<line x1="420.5" y1="89.8" x2="449" y2="89.8" stroke="#fff" stroke-width="1.4"/>
<text x="468.2" y="79.0" font-family='"Liberation Sans", sans-serif' font-size="11.8" fill="#1c9fd3" stroke="#1c9fd3" stroke-width="0.35" textLength="48" lengthAdjust="spacingAndGlyphs">Le réseau</text>
<text x="468.2" y="92.1" font-family='"Liberation Sans", sans-serif' font-size="11.8" fill="#1c9fd3" stroke="#1c9fd3" stroke-width="0.35" textLength="61" lengthAdjust="spacingAndGlyphs">de transport</text>
<text x="468.2" y="105.2" font-family='"Liberation Sans", sans-serif' font-size="11.8" fill="#1c9fd3" stroke="#1c9fd3" stroke-width="0.35" textLength="57" lengthAdjust="spacingAndGlyphs">d’électricité</text>
<rect x="546.6" y="61.1" width="100.4" height="56.1" fill="#fff"/>
<rect x="553.1" y="68.9" width="7.8" height="6.5" fill="#2b3a8c"/><rect x="564.1" y="68.9" width="7.8" height="6.5" fill="#e1000f"/>
<text x="552.7" y="85.2" font-family='"Liberation Sans", sans-serif' font-weight="bold" font-size="7.5" fill="#222" textLength="44" lengthAdjust="spacingAndGlyphs">RÉPUBLIQUE</text>
<text x="552.7" y="93.1" font-family='"Liberation Sans", sans-serif' font-weight="bold" font-size="7.5" fill="#222" textLength="41" lengthAdjust="spacingAndGlyphs">FRANÇAISE</text>
<text x="553" y="100.0" font-family='"Liberation Sans", sans-serif' font-style="italic" font-size="4" fill="#777">Liberté</text>
<text x="553" y="105.0" font-family='"Liberation Sans", sans-serif' font-style="italic" font-size="4" fill="#777">Égalité</text>
<text x="553" y="110.0" font-family='"Liberation Sans", sans-serif' font-style="italic" font-size="4" fill="#777">Fraternité</text>
<rect x="606.9" y="66.5" width="35" height="45" fill="#fff" stroke="#3d6db5" stroke-width="1"/>
<text x="624.3" y="75" font-family='"Liberation Sans", sans-serif' font-weight="bold" font-size="6.6" fill="#e1000f" text-anchor="middle" textLength="25" lengthAdjust="spacing">ADEME</text>
<circle cx="624.2" cy="87.1" r="8.8" fill="#2c51a4"/>
<path d="M620 82c2-2 5-2 6 0c-1 2-3 2-3 5c-2 0-4-3-3-5zM626 88c2 0 4 1 3 3c-1 2-3 1-3-3z" fill="#dfe6f5" opacity=".8"/>
<text x="624.3" y="101.70" font-family='"Liberation Sans", sans-serif' font-weight="bold" font-size="2.7" fill="#e1000f" text-anchor="middle" textLength="25" lengthAdjust="spacingAndGlyphs">AGENCE DE LA</text>
<text x="624.3" y="105.25" font-family='"Liberation Sans", sans-serif' font-weight="bold" font-size="2.7" fill="#e1000f" text-anchor="middle" textLength="25" lengthAdjust="spacingAndGlyphs">TRANSITION</text>
<text x="624.3" y="108.80" font-family='"Liberation Sans", sans-serif' font-weight="bold" font-size="2.7" fill="#e1000f" text-anchor="middle" textLength="25" lengthAdjust="spacingAndGlyphs">ÉCOLOGIQUE</text>
<path d="M169 136H660.8V258.6H169ZM172.2 139.1V188.7H289.2V139.1ZM172.2 194.4V252.9H289.2V194.4ZM294.9 139.1V188.7H411.6V139.1ZM294.9 194.4V252.9H411.6V194.4ZM417.1 139.1V188.7H533.2V139.1ZM417.1 194.4V252.9H533.2V194.4ZM538.9 139.1V188.7H655.1V139.1ZM538.9 194.4V252.9H655.1V194.4Z" fill="#dcdcdc" fill-rule="evenodd"/>
<text y="174.9" font-family='"Liberation Sans", sans-serif' font-size="33" fill="#000" xml:space="preserve"><tspan x="222.85">J</tspan></text>
<text y="174.9" font-family='"Liberation Sans", sans-serif' font-size="33" fill="#000" xml:space="preserve"><tspan x="313.05">J </tspan><tspan x="344.26">+ </tspan><tspan x="374.32">1</tspan></text>
<text y="174.9" font-family='"Liberation Sans", sans-serif' font-size="33" fill="#000" xml:space="preserve"><tspan x="435.25">J </tspan><tspan x="466.37">+ </tspan><tspan x="499.72" font-weight="bold">2</tspan></text>
<text y="174.9" font-family='"Liberation Sans", sans-serif' font-size="33" fill="#000" xml:space="preserve"><tspan x="556.75">J </tspan><tspan x="588.16">+ </tspan><tspan x="621.53" font-weight="bold">3</tspan></text>
<svg x="180" y="195" width="106" height="55" viewBox="0 0 106 55" preserveAspectRatio="none">
<rect width="106" height="55" fill="url(#wg)"/>
<circle cx="71.7" cy="-51.4" r="76.5" fill="#00efcb"/>
<circle cx="70.1" cy="-66.4" r="78.1" fill="#00a189"/>
</svg>
<svg x="302" y="196" width="106.2" height="56" viewBox="0 0 106 55" preserveAspectRatio="none">
<rect width="106" height="55" fill="url(#wg)"/>
<circle cx="71.7" cy="-51.4" r="76.5" fill="#00efcb"/>
<circle cx="70.1" cy="-66.4" r="78.1" fill="#00a189"/>
</svg>
<svg x="424" y="196" width="106" height="55.7" viewBox="0 0 106 55" preserveAspectRatio="none">
<rect width="106" height="55" fill="url(#wg)"/>
<circle cx="71.7" cy="-51.4" r="76.5" fill="#00efcb"/>
<circle cx="70.1" cy="-66.4" r="78.1" fill="#00a189"/>
</svg>
<svg x="544.1" y="196" width="106.1" height="55.7" viewBox="0 0 106 55" preserveAspectRatio="none">
<rect width="106" height="55" fill="url(#wg)"/>
<circle cx="71.7" cy="-51.4" r="76.5" fill="#00efcb"/>
<circle cx="70.1" cy="-66.4" r="78.1" fill="#00a189"/>
</svg>
</g>
<path d="M1990 62H2406V88Q2406 98 2396 98H1990Z" fill="#fff"/>
<text x="2198" y="89" font-family='"DejaVu Sans Condensed", "DejaVu Sans", "Liberation Sans", sans-serif' font-weight="bold" font-size="25" fill="#000" text-anchor="middle" textLength="172.7" lengthAdjust="spacingAndGlyphs">LHB-site-L00Y</text>
<rect x="1991.5" y="107.9" width="413" height="57.79999999999998" rx="9" ry="9" fill="#fff" stroke="#808080" stroke-width="3.5"/>
<text x="2207.5" y="148.1" font-family='"DejaVu Sans Condensed", "DejaVu Sans", "Liberation Sans", sans-serif' font-size="27.5" fill="#000" text-anchor="middle" textLength="296" lengthAdjust="spacingAndGlyphs" xml:space="preserve">Consommation: 32 kWh</text>
<rect x="1991.5" y="178.5" width="413" height="57.599999999999994" rx="9" ry="9" fill="#fff" stroke="#808080" stroke-width="3.5"/>
<text x="2207.5" y="218.6" font-family='"DejaVu Sans Condensed", "DejaVu Sans", "Liberation Sans", sans-serif' font-size="27.5" fill="#000" text-anchor="middle" textLength="172.8" lengthAdjust="spacingAndGlyphs" xml:space="preserve">P Max :  3 kW</text>
<rect x="1991.5" y="248.5" width="413" height="57.60000000000002" rx="9" ry="9" fill="#fff" stroke="#808080" stroke-width="3.5"/>
<text x="2207.5" y="288.6" font-family='"DejaVu Sans Condensed", "DejaVu Sans", "Liberation Sans", sans-serif' font-size="27.5" fill="#000" text-anchor="middle" textLength="159.3" lengthAdjust="spacingAndGlyphs" xml:space="preserve">P min : 0 kW</text>
<rect x="1047.4" y="541.8" width="522.6" height="70.2" rx="9" ry="9" fill="#fff" fill-opacity="0.9"/>
<text x="1314.3" y="588.5" font-family='"DejaVu Sans Condensed", "DejaVu Sans", "Liberation Sans", sans-serif' font-weight="bold" font-size="28.5" fill="#111" text-anchor="middle" textLength="352.7" lengthAdjust="spacingAndGlyphs">dimanche 12 avril 2026</text>
<g id="botchart">
<rect x="155.4" y="815.57" width="2261.0" height="505.73" fill="#fff" filter="url(#sh)"/>
<rect x="155.40" y="815.57" width="323.00" height="505.73" fill="#f0f0f0"/>
<rect x="801.40" y="815.57" width="323.00" height="505.73" fill="#f0f0f0"/>
<rect x="1447.40" y="815.57" width="323.00" height="505.73" fill="#f0f0f0"/>
<rect x="2093.40" y="815.57" width="323.00" height="505.73" fill="#f0f0f0"/>
<line x1="478.50" y1="815.57" x2="478.50" y2="1320.2" stroke="#c4c4c4" stroke-width="1.15"/>
<line x1="801.50" y1="815.57" x2="801.50" y2="1320.2" stroke="#c4c4c4" stroke-width="1.15"/>
<line x1="1124.50" y1="815.57" x2="1124.50" y2="1320.2" stroke="#c4c4c4" stroke-width="1.15"/>
<line x1="1447.50" y1="815.57" x2="1447.50" y2="1320.2" stroke="#c4c4c4" stroke-width="1.15"/>
<line x1="1770.50" y1="815.57" x2="1770.50" y2="1320.2" stroke="#c4c4c4" stroke-width="1.15"/>
<line x1="2093.50" y1="815.57" x2="2093.50" y2="1320.2" stroke="#c4c4c4" stroke-width="1.15"/>
<line x1="2416.50" y1="815.57" x2="2416.50" y2="1320.2" stroke="#c4c4c4" stroke-width="1.15"/>
<rect x="155.4" y="815.57" width="2261.0" height="56.07" fill="#f0f0f0"/>
<rect x="155.4" y="927.71" width="2261.0" height="56.07" fill="#f0f0f0"/>
<rect x="155.4" y="1039.85" width="2261.0" height="56.07" fill="#f0f0f0"/>
<rect x="155.4" y="1151.99" width="2261.0" height="56.07" fill="#f0f0f0"/>
<rect x="155.4" y="1264.13" width="2261.0" height="57.17" fill="#f0f0f0"/>
<line x1="155.4" y1="1264.50" x2="2416.4" y2="1264.50" stroke="#b0b0b0" stroke-width="1.1"/>
<line x1="155.4" y1="1208.50" x2="2416.4" y2="1208.50" stroke="#b0b0b0" stroke-width="1.1"/>
<line x1="155.4" y1="1151.50" x2="2416.4" y2="1151.50" stroke="#b0b0b0" stroke-width="1.1"/>
<line x1="155.4" y1="1095.50" x2="2416.4" y2="1095.50" stroke="#b0b0b0" stroke-width="1.1"/>
<line x1="155.4" y1="1039.50" x2="2416.4" y2="1039.50" stroke="#b0b0b0" stroke-width="1.1"/>
<line x1="155.4" y1="983.50" x2="2416.4" y2="983.50" stroke="#b0b0b0" stroke-width="1.1"/>
<line x1="155.4" y1="927.50" x2="2416.4" y2="927.50" stroke="#b0b0b0" stroke-width="1.1"/>
<line x1="155.4" y1="871.50" x2="2416.4" y2="871.50" stroke="#b0b0b0" stroke-width="1.1"/>
<line x1="155.4" y1="815.50" x2="2416.4" y2="815.50" stroke="#b0b0b0" stroke-width="1.1"/>
<path d="M155.40 1321.3V1314.59H237.00V1321.3ZM384.20 1321.3V1314.59H559.80V1321.3ZM707.00 1321.3V1314.59H882.00V1321.3ZM1029.50 1321.3V1314.59H1204.80V1321.3ZM1353.20 1321.3V1314.59H1527.80V1321.3ZM1675.80 1321.3V1314.59H2312.50V1321.3ZM209.40 1321.3V1308.99H213.60V1321.3ZM226.00 1321.3V1308.99H227.80V1321.3ZM232.80 1321.3V1308.99H235.00V1321.3ZM430.10 1321.3V1308.99H433.50V1321.3ZM446.90 1321.3V1308.99H449.40V1321.3ZM517.10 1321.3V1308.99H519.60V1321.3ZM524.10 1321.3V1308.99H528.00V1321.3ZM528.80 1321.3V1303.38H531.00V1321.3ZM531.30 1321.3V1308.99H533.15V1321.3ZM534.66 1321.3V1308.99H536.51V1321.3ZM538.02 1321.3V1308.99H539.87V1321.3ZM541.38 1321.3V1308.99H543.23V1321.3ZM544.74 1321.3V1308.99H546.59V1321.3ZM548.10 1321.3V1308.99H549.95V1321.3ZM551.46 1321.3V1308.99H553.31V1321.3ZM554.82 1321.3V1308.99H556.67V1321.3ZM558.18 1321.3V1308.99H559.80V1321.3ZM719.30 1321.3V1308.99H723.50V1321.3ZM824.60 1321.3V1308.99H827.10V1321.3ZM827.10 1321.3V1303.38H829.20V1321.3ZM842.50 1321.3V1308.99H844.70V1321.3ZM853.90 1321.3V1308.99H856.10V1321.3ZM860.30 1321.3V1308.99H862.60V1321.3ZM866.50 1321.3V1308.99H868.18V1321.3ZM869.30 1321.3V1308.99H870.98V1321.3ZM872.10 1321.3V1308.99H873.78V1321.3ZM874.90 1321.3V1308.99H875.00V1321.3ZM875.44 1321.3V1247.31H876.38V1321.3ZM876.38 1321.3V1168.81H878.52V1321.3ZM878.52 1321.3V1230.49H880.13V1321.3ZM880.13 1321.3V1224.88H882.15V1321.3ZM1515.03 1321.3V1286.56H1517.45V1321.3ZM1517.45 1321.3V1280.95H1519.87V1321.3ZM1519.87 1321.3V1297.77H1521.21V1321.3ZM1521.21 1321.3V1292.16H1525.23V1321.3ZM1525.23 1321.3V1297.77H1526.85V1321.3ZM1777.90 1321.3V1308.99H1781.70V1321.3ZM1808.00 1321.3V1308.99H1812.50V1321.3ZM1818.90 1321.3V1308.99H1820.85V1321.3ZM1822.80 1321.3V1308.99H1824.75V1321.3ZM1826.70 1321.3V1308.99H1828.65V1321.3ZM1830.60 1321.3V1308.99H1832.55V1321.3ZM1834.50 1321.3V1308.99H1836.45V1321.3ZM1838.40 1321.3V1308.99H1840.35V1321.3ZM1842.30 1321.3V1308.99H1844.25V1321.3ZM1846.20 1321.3V1308.99H1848.15V1321.3ZM1850.10 1321.3V1308.99H1852.05V1321.3ZM1854.00 1321.3V1308.99H1855.95V1321.3ZM1857.90 1321.3V1308.99H1859.85V1321.3ZM1861.80 1321.3V1308.99H1863.75V1321.3ZM1865.70 1321.3V1308.99H1867.65V1321.3ZM1869.60 1321.3V1308.99H1871.55V1321.3ZM1873.50 1321.3V1308.99H1875.00V1321.3ZM1874.90 1321.3V1308.99H1880.70V1321.3ZM1876.60 1321.3V1303.38H1878.60V1321.3ZM1960.50 1321.3V1308.99H1962.70V1321.3ZM1978.20 1321.3V1308.99H1980.60V1321.3ZM1997.80 1321.3V1308.99H2002.00V1321.3ZM1998.70 1321.3V1303.38H2000.30V1321.3ZM2086.50 1321.3V1308.99H2088.10V1321.3ZM2105.00 1321.3V1303.38H2107.60V1321.3ZM2107.60 1321.3V1308.99H2109.30V1321.3ZM2115.00 1321.3V1308.99H2117.60V1321.3ZM2129.80 1321.3V1308.99H2132.20V1321.3ZM2158.60 1321.3V1308.99H2162.80V1321.3ZM2170.30 1321.3V1308.99H2172.46V1321.3ZM2173.90 1321.3V1308.99H2176.06V1321.3ZM2177.50 1321.3V1308.99H2179.66V1321.3ZM2181.10 1321.3V1308.99H2183.26V1321.3ZM2184.70 1321.3V1308.99H2186.86V1321.3ZM2188.30 1321.3V1308.99H2190.46V1321.3ZM2191.90 1321.3V1308.99H2194.06V1321.3ZM2195.50 1321.3V1308.99H2197.66V1321.3ZM2199.10 1321.3V1308.99H2201.26V1321.3ZM2202.70 1321.3V1308.99H2204.86V1321.3ZM2206.30 1321.3V1308.99H2208.46V1321.3ZM2209.90 1321.3V1308.99H2210.50V1321.3ZM2210.50 1321.3V1303.38H2214.60V1321.3ZM2214.60 1321.3V1308.99H2217.29V1321.3ZM2217.96 1321.3V1308.99H2220.65V1321.3ZM2221.32 1321.3V1308.99H2224.01V1321.3ZM2224.68 1321.3V1308.99H2227.37V1321.3ZM2228.04 1321.3V1308.99H2230.73V1321.3ZM2231.40 1321.3V1308.99H2234.09V1321.3ZM2234.76 1321.3V1308.99H2237.45V1321.3ZM2238.12 1321.3V1308.99H2240.81V1321.3ZM2241.48 1321.3V1308.99H2244.17V1321.3ZM2244.84 1321.3V1308.99H2247.53V1321.3ZM2248.20 1321.3V1308.99H2250.89V1321.3ZM2251.56 1321.3V1308.99H2254.25V1321.3ZM2254.92 1321.3V1308.99H2257.61V1321.3ZM2258.28 1321.3V1308.99H2260.97V1321.3ZM2261.64 1321.3V1308.99H2264.33V1321.3ZM2265.00 1321.3V1308.99H2267.69V1321.3ZM2268.36 1321.3V1308.99H2271.05V1321.3ZM2271.72 1321.3V1308.99H2274.41V1321.3ZM2275.08 1321.3V1308.99H2277.77V1321.3ZM2278.44 1321.3V1308.99H2281.13V1321.3ZM2281.80 1321.3V1308.99H2284.49V1321.3ZM2285.16 1321.3V1308.99H2287.85V1321.3ZM2288.52 1321.3V1308.99H2291.21V1321.3ZM2291.88 1321.3V1308.99H2294.57V1321.3ZM2295.24 1321.3V1308.99H2297.93V1321.3ZM2298.60 1321.3V1308.99H2301.29V1321.3ZM2301.96 1321.3V1308.99H2304.65V1321.3ZM2305.32 1321.3V1308.99H2308.01V1321.3ZM2308.68 1321.3V1308.99H2310.00V1321.3ZM2310.00 1321.3V1303.38H2312.50V1321.3Z" fill="#a0ecc4"/>
<path d="M237.00 1321.3V1314.59H384.20V1321.3ZM559.80 1321.3V1314.59H707.00V1321.3ZM882.00 1321.3V1314.59H1029.50V1321.3ZM1204.80 1321.3V1314.59H1353.20V1321.3ZM1527.80 1321.3V1314.59H1675.80V1321.3ZM237.00 1321.3V1308.99H239.08V1321.3ZM240.36 1321.3V1308.99H242.44V1321.3ZM243.72 1321.3V1308.99H245.80V1321.3ZM247.08 1321.3V1308.99H249.16V1321.3ZM250.44 1321.3V1308.99H252.52V1321.3ZM253.80 1321.3V1308.99H255.88V1321.3ZM257.16 1321.3V1308.99H259.24V1321.3ZM260.52 1321.3V1308.99H262.60V1321.3ZM263.88 1321.3V1308.99H265.96V1321.3ZM267.24 1321.3V1308.99H269.32V1321.3ZM270.60 1321.3V1308.99H271.00V1321.3ZM306.70 1321.3V1308.99H311.40V1321.3ZM560.07 1321.3V1308.99H569.46V1321.3ZM569.46 1321.3V1292.16H570.40V1321.3ZM570.40 1321.3V1191.24H572.15V1321.3ZM572.15 1321.3V1084.71H573.76V1321.3ZM573.76 1321.3V1023.03H575.23V1321.3ZM575.23 1321.3V1017.42H576.85V1321.3ZM576.85 1321.3V1095.92H577.25V1321.3ZM577.25 1321.3V978.17H579.53V1321.3ZM579.53 1321.3V1045.46H580.34V1321.3ZM580.34 1321.3V1135.17H581.14V1321.3ZM581.14 1321.3V1219.27H582.21V1321.3ZM582.21 1321.3V1227.68H583.56V1321.3ZM583.56 1321.3V1233.85H584.63V1321.3ZM584.63 1321.3V1023.03H586.51V1321.3ZM586.51 1321.3V1056.67H588.26V1321.3ZM588.26 1321.3V1213.67H589.33V1321.3ZM589.33 1321.3V1224.88H590.67V1321.3ZM590.67 1321.3V1196.85H592.68V1321.3ZM592.68 1321.3V1224.88H593.62V1321.3ZM593.62 1321.3V1247.31H596.31V1321.3ZM596.31 1321.3V1252.92H597.65V1321.3ZM597.65 1321.3V1247.31H598.99V1321.3ZM598.99 1321.3V1269.74H600.34V1321.3ZM600.34 1321.3V1286.56H601.68V1321.3ZM601.68 1321.3V1297.77H603.02V1321.3ZM603.02 1321.3V1292.16H605.03V1321.3ZM605.03 1321.3V1303.38H606.38V1321.3ZM606.38 1321.3V1292.16H608.39V1321.3ZM608.39 1321.3V1275.34H609.46V1321.3ZM609.46 1321.3V1039.85H612.01V1321.3ZM612.01 1321.3V1208.06H613.09V1321.3ZM613.09 1321.3V1241.70H615.10V1321.3ZM615.10 1321.3V1219.27H616.44V1321.3ZM616.44 1321.3V1185.63H618.46V1321.3ZM618.46 1321.3V1219.27H620.07V1321.3ZM620.07 1321.3V1051.06H622.48V1321.3ZM622.48 1321.3V1084.71H623.83V1321.3ZM623.83 1321.3V1208.06H625.17V1321.3ZM625.17 1321.3V1247.31H629.19V1321.3ZM629.19 1321.3V1224.88H631.48V1321.3ZM631.48 1321.3V1252.92H633.89V1321.3ZM633.89 1321.3V1275.34H635.23V1321.3ZM635.23 1321.3V1118.35H637.25V1321.3ZM637.25 1321.3V1157.60H638.59V1321.3ZM638.59 1321.3V1252.92H641.95V1321.3ZM641.95 1321.3V1185.63H643.96V1321.3ZM643.96 1321.3V1252.92H645.97V1321.3ZM645.97 1321.3V1247.31H649.33V1321.3ZM649.33 1321.3V1269.74H652.01V1321.3ZM652.01 1321.3V1280.95H653.36V1321.3ZM653.36 1321.3V1191.24H655.37V1321.3ZM655.37 1321.3V1269.74H657.79V1321.3ZM657.79 1321.3V1252.92H659.40V1321.3ZM659.40 1321.3V1224.88H660.07V1321.3ZM660.07 1321.3V1011.82H661.95V1321.3ZM661.95 1321.3V1073.49H663.42V1321.3ZM663.42 1321.3V1185.63H665.44V1321.3ZM665.44 1321.3V1236.10H667.05V1321.3ZM667.05 1321.3V1196.85H668.79V1321.3ZM668.79 1321.3V1224.88H671.48V1321.3ZM671.48 1321.3V1236.10H673.22V1321.3ZM673.22 1321.3V1230.49H675.10V1321.3ZM675.10 1321.3V1252.92H678.86V1321.3ZM678.86 1321.3V1264.13H679.93V1321.3ZM682.21 1321.3V1308.99H684.23V1321.3ZM701.01 1321.3V1308.99H703.02V1321.3ZM700.90 1321.3V1308.99H703.70V1321.3ZM882.15 1321.3V1219.27H883.49V1321.3ZM883.09 1321.3V1017.42H884.97V1321.3ZM884.97 1321.3V1039.85H886.58V1321.3ZM886.58 1321.3V1028.64H888.19V1321.3ZM888.19 1321.3V1034.24H889.80V1321.3ZM889.80 1321.3V1062.28H891.14V1321.3ZM891.14 1321.3V1011.82H893.15V1321.3ZM893.15 1321.3V1107.13H894.50V1321.3ZM893.56 1321.3V1191.24H895.17V1321.3ZM895.17 1321.3V1224.88H896.91V1321.3ZM896.91 1321.3V1236.10H898.26V1321.3ZM898.26 1321.3V1219.27H899.19V1321.3ZM898.66 1321.3V1051.06H900.00V1321.3ZM900.00 1321.3V1039.85H901.88V1321.3ZM901.88 1321.3V1051.06H904.30V1321.3ZM904.30 1321.3V994.99H906.58V1321.3ZM906.58 1321.3V1028.64H908.05V1321.3ZM908.05 1321.3V1006.21H909.93V1321.3ZM909.93 1321.3V1028.64H911.01V1321.3ZM911.01 1321.3V1056.67H912.08V1321.3ZM912.08 1321.3V1135.17H913.15V1321.3ZM913.02 1321.3V1219.27H914.36V1321.3ZM914.36 1321.3V1236.10H915.70V1321.3ZM915.70 1321.3V1241.70H917.05V1321.3ZM917.05 1321.3V1095.92H918.39V1321.3ZM918.39 1321.3V1067.88H920.00V1321.3ZM920.00 1321.3V1051.06H921.48V1321.3ZM921.48 1321.3V1045.46H925.37V1321.3ZM925.37 1321.3V1090.31H926.71V1321.3ZM926.71 1321.3V1051.06H928.05V1321.3ZM928.05 1321.3V978.17H929.13V1321.3ZM929.13 1321.3V899.67H931.41V1321.3ZM931.41 1321.3V1084.71H933.83V1321.3ZM933.83 1321.3V1039.85H935.44V1321.3ZM935.44 1321.3V1084.71H936.78V1321.3ZM936.78 1321.3V1045.46H938.93V1321.3ZM938.93 1321.3V1062.28H940.13V1321.3ZM940.13 1321.3V1067.88H941.21V1321.3ZM941.21 1321.3V1224.88H942.95V1321.3ZM942.95 1321.3V1140.78H943.89V1321.3ZM943.89 1321.3V994.99H945.91V1321.3ZM945.91 1321.3V1067.88H947.25V1321.3ZM947.25 1321.3V1017.42H948.19V1321.3ZM948.19 1321.3V972.57H950.20V1321.3ZM950.20 1321.3V1090.31H951.54V1321.3ZM951.54 1321.3V1079.10H953.69V1321.3ZM953.29 1321.3V1236.10H955.03V1321.3ZM955.03 1321.3V1219.27H956.91V1321.3ZM956.91 1321.3V1230.49H958.26V1321.3ZM958.26 1321.3V1258.52H960.00V1321.3ZM960.00 1321.3V1252.92H963.36V1321.3ZM963.36 1321.3V1247.31H965.77V1321.3ZM965.77 1321.3V1275.34H968.05V1321.3ZM968.05 1321.3V1297.77H971.41V1321.3ZM971.41 1321.3V1275.34H973.02V1321.3ZM973.02 1321.3V1224.88H976.11V1321.3ZM976.11 1321.3V1039.85H978.12V1321.3ZM978.12 1321.3V1252.92H979.46V1321.3ZM979.46 1321.3V1258.52H981.48V1321.3ZM981.48 1321.3V1252.92H984.16V1321.3ZM984.16 1321.3V1264.13H985.10V1321.3ZM985.10 1321.3V1252.92H987.25V1321.3ZM987.25 1321.3V1264.13H988.59V1321.3ZM988.59 1321.3V1275.34H992.89V1321.3ZM992.89 1321.3V1219.27H994.23V1321.3ZM994.23 1321.3V1180.03H996.24V1321.3ZM996.24 1321.3V1252.92H999.87V1321.3ZM999.87 1321.3V1224.88H1000.94V1321.3ZM1000.94 1321.3V1208.06H1002.95V1321.3ZM1002.95 1321.3V1230.49H1004.97V1321.3ZM1004.97 1321.3V1247.31H1006.31V1321.3ZM1006.31 1321.3V1230.49H1008.72V1321.3ZM1008.72 1321.3V1236.10H1011.68V1321.3ZM1011.68 1321.3V1247.31H1013.02V1321.3ZM1013.02 1321.3V1252.92H1014.36V1321.3ZM1014.36 1321.3V1292.16H1015.97V1321.3ZM1015.97 1321.3V1303.38H1017.05V1321.3ZM1022.80 1321.3V1308.99H1025.30V1321.3ZM1221.74 1321.3V1280.95H1223.09V1321.3ZM1223.09 1321.3V1269.74H1225.50V1321.3ZM1225.50 1321.3V1230.49H1226.85V1321.3ZM1226.17 1321.3V1011.82H1227.92V1321.3ZM1227.92 1321.3V1084.71H1229.53V1321.3ZM1229.53 1321.3V1067.88H1231.81V1321.3ZM1231.95 1321.3V1230.49H1232.89V1321.3ZM1232.89 1321.3V1247.31H1234.23V1321.3ZM1234.23 1321.3V1241.70H1239.19V1321.3ZM1239.19 1321.3V1247.31H1240.54V1321.3ZM1240.54 1321.3V1269.74H1241.88V1321.3ZM1241.88 1321.3V1275.34H1244.97V1321.3ZM1244.97 1321.3V1286.56H1246.31V1321.3ZM1246.31 1321.3V1297.77H1253.42V1321.3ZM1253.42 1321.3V1286.56H1254.36V1321.3ZM1254.36 1321.3V1163.20H1255.30V1321.3ZM1255.03 1321.3V1135.17H1257.45V1321.3ZM1257.45 1321.3V1269.74H1258.79V1321.3ZM1258.79 1321.3V1286.56H1260.40V1321.3ZM1260.40 1321.3V1275.34H1265.10V1321.3ZM1265.10 1321.3V1280.95H1266.44V1321.3ZM1266.44 1321.3V1252.92H1267.79V1321.3ZM1267.52 1321.3V832.39H1269.53V1321.3ZM1269.53 1321.3V922.10H1271.14V1321.3ZM1271.14 1321.3V989.39H1273.15V1321.3ZM1273.15 1321.3V1236.10H1276.51V1321.3ZM1276.51 1321.3V1230.49H1278.52V1321.3ZM1278.52 1321.3V1241.70H1282.15V1321.3ZM1282.15 1321.3V1095.92H1284.56V1321.3ZM1284.56 1321.3V1174.42H1286.17V1321.3ZM1286.17 1321.3V1185.63H1286.98V1321.3ZM1286.98 1321.3V1236.10H1287.92V1321.3ZM1287.92 1321.3V1275.34H1289.26V1321.3ZM1289.26 1321.3V1269.74H1291.28V1321.3ZM1291.28 1321.3V1275.34H1295.30V1321.3ZM1295.30 1321.3V1269.74H1297.72V1321.3ZM1297.72 1321.3V1275.34H1300.00V1321.3ZM1300.00 1321.3V1297.77H1302.28V1321.3ZM1302.28 1321.3V1303.38H1304.43V1321.3ZM1304.43 1321.3V1297.77H1306.71V1321.3ZM1306.71 1321.3V1303.38H1308.05V1321.3ZM1308.05 1321.3V1275.34H1310.07V1321.3ZM1310.07 1321.3V1045.46H1312.48V1321.3ZM1312.48 1321.3V1258.52H1314.09V1321.3ZM1314.09 1321.3V1269.74H1315.17V1321.3ZM1315.17 1321.3V1213.67H1316.78V1321.3ZM1316.78 1321.3V1269.74H1320.13V1321.3ZM1320.13 1321.3V1275.34H1321.48V1321.3ZM1321.48 1321.3V1118.35H1322.55V1321.3ZM1322.55 1321.3V1034.24H1324.83V1321.3ZM1324.83 1321.3V1140.78H1326.17V1321.3ZM1326.17 1321.3V1213.67H1327.25V1321.3ZM1327.25 1321.3V1247.31H1328.59V1321.3ZM1328.59 1321.3V1236.10H1330.47V1321.3ZM1330.47 1321.3V1230.49H1332.21V1321.3ZM1332.21 1321.3V1264.13H1334.23V1321.3ZM1334.23 1321.3V1269.74H1339.60V1321.3ZM1339.60 1321.3V1275.34H1340.67V1321.3ZM1340.67 1321.3V1286.56H1341.61V1321.3ZM1341.61 1321.3V1303.38H1342.55V1321.3ZM1543.22 1321.3V1303.38H1544.30V1321.3ZM1544.30 1321.3V1180.03H1546.71V1321.3ZM1546.71 1321.3V1196.85H1548.05V1321.3ZM1548.05 1321.3V1224.88H1548.99V1321.3ZM1548.99 1321.3V1230.49H1550.34V1321.3ZM1550.34 1321.3V1135.17H1551.68V1321.3ZM1551.68 1321.3V1079.10H1552.75V1321.3ZM1552.75 1321.3V1006.21H1554.36V1321.3ZM1554.36 1321.3V1034.24H1555.84V1321.3ZM1555.84 1321.3V1006.21H1557.99V1321.3ZM1557.99 1321.3V1090.31H1559.06V1321.3ZM1559.06 1321.3V1208.06H1560.67V1321.3ZM1560.40 1321.3V1095.92H1561.74V1321.3ZM1561.48 1321.3V1062.28H1562.82V1321.3ZM1562.82 1321.3V1011.82H1565.10V1321.3ZM1565.10 1321.3V1151.99H1566.04V1321.3ZM1565.77 1321.3V1247.31H1568.46V1321.3ZM1568.46 1321.3V1252.92H1570.47V1321.3ZM1570.47 1321.3V1236.10H1571.81V1321.3ZM1571.41 1321.3V1073.49H1573.56V1321.3ZM1573.29 1321.3V1084.71H1574.90V1321.3ZM1574.90 1321.3V1191.24H1576.24V1321.3ZM1576.24 1321.3V1258.52H1577.58V1321.3ZM1577.32 1321.3V1135.17H1579.19V1321.3ZM1579.19 1321.3V1112.74H1580.54V1321.3ZM1580.27 1321.3V1067.88H1582.42V1321.3ZM1582.15 1321.3V1185.63H1583.49V1321.3ZM1583.49 1321.3V1264.13H1585.23V1321.3ZM1585.23 1321.3V1236.10H1586.58V1321.3ZM1586.58 1321.3V1230.49H1588.19V1321.3ZM1588.19 1321.3V1247.31H1589.66V1321.3ZM1589.66 1321.3V1180.03H1591.28V1321.3ZM1591.14 1321.3V1062.28H1592.89V1321.3ZM1592.89 1321.3V1180.03H1595.03V1321.3ZM1595.03 1321.3V1258.52H1596.11V1321.3ZM1596.11 1321.3V1275.34H1599.33V1321.3ZM1599.33 1321.3V1280.95H1600.67V1321.3ZM1600.67 1321.3V1151.99H1602.01V1321.3ZM1601.74 1321.3V1079.10H1603.89V1321.3ZM1603.89 1321.3V1107.13H1605.37V1321.3ZM1605.37 1321.3V1112.74H1606.44V1321.3ZM1606.04 1321.3V1196.85H1607.65V1321.3ZM1607.65 1321.3V1224.88H1608.99V1321.3ZM1608.99 1321.3V1247.31H1610.74V1321.3ZM1610.74 1321.3V1258.52H1612.75V1321.3ZM1612.75 1321.3V1264.13H1615.44V1321.3ZM1615.44 1321.3V1269.74H1617.45V1321.3ZM1617.45 1321.3V1258.52H1618.79V1321.3ZM1618.79 1321.3V1230.49H1621.48V1321.3ZM1621.48 1321.3V1247.31H1622.82V1321.3ZM1622.82 1321.3V1258.52H1624.16V1321.3ZM1624.16 1321.3V1219.27H1625.50V1321.3ZM1625.23 1321.3V1084.71H1626.44V1321.3ZM1626.44 1321.3V1062.28H1628.59V1321.3ZM1628.59 1321.3V1079.10H1629.93V1321.3ZM1629.93 1321.3V1073.49H1631.14V1321.3ZM1631.14 1321.3V1045.46H1632.21V1321.3ZM1632.21 1321.3V1028.64H1634.23V1321.3ZM1634.23 1321.3V1146.38H1635.30V1321.3ZM1635.30 1321.3V1247.31H1636.24V1321.3ZM1636.24 1321.3V1258.52H1637.58V1321.3ZM1637.58 1321.3V1275.34H1645.64V1321.3ZM1645.64 1321.3V1135.17H1647.65V1321.3ZM1647.65 1321.3V1174.42H1648.99V1321.3ZM1648.99 1321.3V1236.10H1651.01V1321.3ZM1651.01 1321.3V1230.49H1653.02V1321.3ZM1653.02 1321.3V1269.74H1655.70V1321.3ZM1655.70 1321.3V1252.92H1657.05V1321.3ZM1657.05 1321.3V1236.10H1659.06V1321.3ZM1659.06 1321.3V1269.74H1661.74V1321.3ZM1661.74 1321.3V1303.38H1667.11V1321.3ZM1667.11 1321.3V1308.99H1668.05V1321.3ZM1668.05 1321.3V1303.38H1670.20V1321.3ZM1670.20 1321.3V1308.99H1671.54V1321.3Z" fill="#24906f"/>
<line x1="154.8" y1="815.27" x2="154.8" y2="1322.1" stroke="#6a6a6a" stroke-width="2.2"/>
<line x1="153.8" y1="1321.3" x2="2416.4" y2="1321.3" stroke="#757575" stroke-width="1.7"/>
<line x1="143.4" y1="1320.50" x2="154.8" y2="1320.50" stroke="#8a8a8a" stroke-width="1.2"/>
<text x="133.6" y="1326.70" font-family='"DejaVu Sans", "Liberation Sans", sans-serif' font-size="20" fill="#3c3c3c" text-anchor="end">0</text>
<line x1="143.4" y1="1263.83" x2="154.8" y2="1263.83" stroke="#8a8a8a" stroke-width="1.2"/>
<text x="133.6" y="1270.03" font-family='"DejaVu Sans", "Liberation Sans", sans-serif' font-size="20" fill="#3c3c3c" text-anchor="end">10</text>
<line x1="143.4" y1="1207.76" x2="154.8" y2="1207.76" stroke="#8a8a8a" stroke-width="1.2"/>
<text x="133.6" y="1213.96" font-family='"DejaVu Sans", "Liberation Sans", sans-serif' font-size="20" fill="#3c3c3c" text-anchor="end">20</text>
<line x1="143.4" y1="1151.69" x2="154.8" y2="1151.69" stroke="#8a8a8a" stroke-width="1.2"/>
<text x="133.6" y="1157.89" font-family='"DejaVu Sans", "Liberation Sans", sans-serif' font-size="20" fill="#3c3c3c" text-anchor="end">30</text>
<line x1="143.4" y1="1095.62" x2="154.8" y2="1095.62" stroke="#8a8a8a" stroke-width="1.2"/>
<text x="133.6" y="1101.82" font-family='"DejaVu Sans", "Liberation Sans", sans-serif' font-size="20" fill="#3c3c3c" text-anchor="end">40</text>
<line x1="143.4" y1="1039.55" x2="154.8" y2="1039.55" stroke="#8a8a8a" stroke-width="1.2"/>
<text x="133.6" y="1045.75" font-family='"DejaVu Sans", "Liberation Sans", sans-serif' font-size="20" fill="#3c3c3c" text-anchor="end">50</text>
<line x1="143.4" y1="983.48" x2="154.8" y2="983.48" stroke="#8a8a8a" stroke-width="1.2"/>
<text x="133.6" y="989.68" font-family='"DejaVu Sans", "Liberation Sans", sans-serif' font-size="20" fill="#3c3c3c" text-anchor="end">60</text>
<line x1="143.4" y1="927.41" x2="154.8" y2="927.41" stroke="#8a8a8a" stroke-width="1.2"/>
<text x="133.6" y="933.61" font-family='"DejaVu Sans", "Liberation Sans", sans-serif' font-size="20" fill="#3c3c3c" text-anchor="end">70</text>
<line x1="143.4" y1="871.34" x2="154.8" y2="871.34" stroke="#8a8a8a" stroke-width="1.2"/>
<text x="133.6" y="877.54" font-family='"DejaVu Sans", "Liberation Sans", sans-serif' font-size="20" fill="#3c3c3c" text-anchor="end">80</text>
<line x1="143.4" y1="815.27" x2="154.8" y2="815.27" stroke="#8a8a8a" stroke-width="1.2"/>
<text x="133.6" y="821.47" font-family='"DejaVu Sans", "Liberation Sans", sans-serif' font-size="20" fill="#3c3c3c" text-anchor="end">90</text>
<line x1="156.15" y1="1322.1" x2="156.15" y2="1332.6" stroke="#a0a0a0" stroke-width="1.3"/>
<text x="156.00" y="1356.9" font-family='"DejaVu Sans", "Liberation Sans", sans-serif' font-size="20" fill="#000" stroke="#000" stroke-width="0.3" text-anchor="middle">lun. 06</text>
<line x1="478.40" y1="1322.1" x2="478.40" y2="1332.6" stroke="#a0a0a0" stroke-width="1.3"/>
<text x="479.00" y="1356.9" font-family='"DejaVu Sans", "Liberation Sans", sans-serif' font-size="20" fill="#000" stroke="#000" stroke-width="0.3" text-anchor="middle">mar. 07</text>
<line x1="801.40" y1="1322.1" x2="801.40" y2="1332.6" stroke="#a0a0a0" stroke-width="1.3"/>
<text x="802.00" y="1356.9" font-family='"DejaVu Sans", "Liberation Sans", sans-serif' font-size="20" fill="#000" stroke="#000" stroke-width="0.3" text-anchor="middle">mer. 08</text>
<line x1="1124.40" y1="1322.1" x2="1124.40" y2="1332.6" stroke="#a0a0a0" stroke-width="1.3"/>
<text x="1125.00" y="1356.9" font-family='"DejaVu Sans", "Liberation Sans", sans-serif' font-size="20" fill="#000" stroke="#000" stroke-width="0.3" text-anchor="middle">jeu. 09</text>
<line x1="1447.40" y1="1322.1" x2="1447.40" y2="1332.6" stroke="#a0a0a0" stroke-width="1.3"/>
<text x="1448.00" y="1356.9" font-family='"DejaVu Sans", "Liberation Sans", sans-serif' font-size="20" fill="#000" stroke="#000" stroke-width="0.3" text-anchor="middle">ven. 10</text>
<line x1="1770.40" y1="1322.1" x2="1770.40" y2="1332.6" stroke="#a0a0a0" stroke-width="1.3"/>
<text x="1771.00" y="1356.9" font-family='"DejaVu Sans", "Liberation Sans", sans-serif' font-size="20" fill="#000" stroke="#000" stroke-width="0.3" text-anchor="middle">sam. 11</text>
<line x1="2093.40" y1="1322.1" x2="2093.40" y2="1332.6" stroke="#a0a0a0" stroke-width="1.3"/>
<text x="2094.00" y="1356.9" font-family='"DejaVu Sans", "Liberation Sans", sans-serif' font-size="20" fill="#000" stroke="#000" stroke-width="0.3" text-anchor="middle">dim. 12</text>
<text transform="translate(86.4,1067.8) rotate(-90) scale(1.02,1.10)" font-family='"DejaVu Sans", "Liberation Sans", sans-serif' font-size="20" fill="#333" text-anchor="middle">kW</text>
</g>
<rect x="562.1" y="806.3" width="412.19999999999993" height="57.80000000000007" rx="9" ry="9" fill="#fff" stroke="#808080" stroke-width="3.5"/>
<text x="777.7" y="846.5" font-family='"DejaVu Sans Condensed", "DejaVu Sans", "Liberation Sans", sans-serif' font-size="27.5" fill="#000" text-anchor="middle" textLength="311" lengthAdjust="spacingAndGlyphs" xml:space="preserve">Consommation: 903 kWh</text>
<rect x="1099.8" y="806.3" width="412.70000000000005" height="57.80000000000007" rx="9" ry="9" fill="#fff" stroke="#808080" stroke-width="3.5"/>
<text x="1315.7" y="846.5" font-family='"DejaVu Sans Condensed", "DejaVu Sans", "Liberation Sans", sans-serif' font-size="27.5" fill="#000" text-anchor="middle" textLength="188.5" lengthAdjust="spacingAndGlyphs" xml:space="preserve">P Max :  87 kW</text>
<rect x="1609.6" y="806.3" width="412.70000000000005" height="57.80000000000007" rx="9" ry="9" fill="#fff" stroke="#808080" stroke-width="3.5"/>
<text x="1825.4" y="846.5" font-family='"DejaVu Sans Condensed", "DejaVu Sans", "Liberation Sans", sans-serif' font-size="27.5" fill="#000" text-anchor="middle" textLength="160" lengthAdjust="spacingAndGlyphs" xml:space="preserve">P min : 0 kW</text>
<g id="g2e">
<rect x="2322" y="1322.2" width="116" height="57.4" fill="#fff"/>
<text y="1363.2" font-family='"Liberation Sans", sans-serif' fill="#0b6db7" stroke="#0b6db7" stroke-width="1.5" stroke-linejoin="round"><tspan x="2333.2" font-size="42" textLength="31.5" lengthAdjust="spacingAndGlyphs">G</tspan><tspan x="2366.2" font-size="35.5" textLength="20" lengthAdjust="spacingAndGlyphs">2</tspan></text>
<path d="M2392.5 1324.5L2383.6 1338.1L2391.5 1341L2389.4 1363.5L2400 1338.4L2391.8 1335.5Z" fill="#e8592a"/>
<path d="M2403.2 1339H2424.3L2419.3 1344.8H2400.9ZM2399.2 1348.2H2418.2L2413.7 1354H2397ZM2395.3 1357.4H2416.8L2412 1363.2H2393.1Z" fill="#f39221"/>
<text x="2393.6" y="1334.5" font-family='"Liberation Sans", sans-serif' font-weight="bold" font-size="7.4" fill="#e8592a" textLength="30.1" lengthAdjust="spacingAndGlyphs">FRANCE</text>
<text x="2339.5" y="1368.3" font-family='"Liberation Sans", sans-serif' font-size="4" fill="#0b6db7" textLength="74.8" lengthAdjust="spacingAndGlyphs">Optimisation des ressources énergétiques</text>
</g>
</svg>
</body></html>
